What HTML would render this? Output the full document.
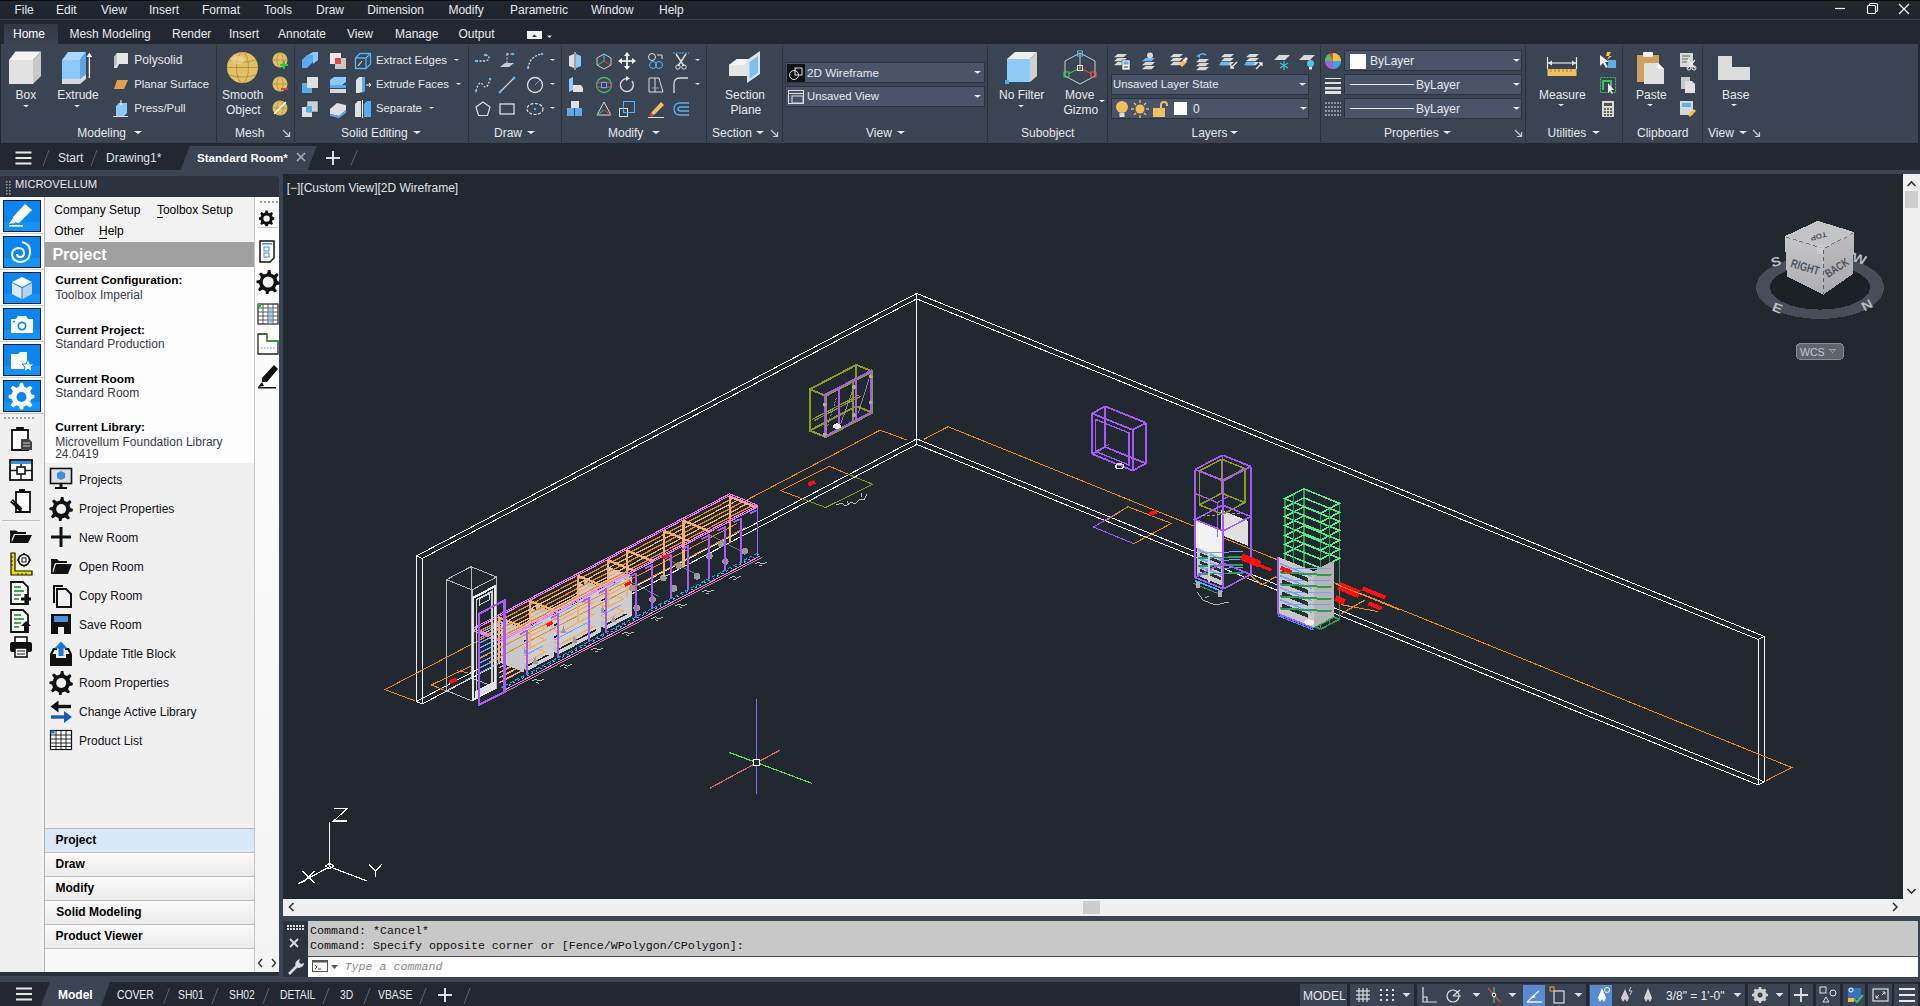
<!DOCTYPE html>
<html><head><meta charset="utf-8"><style>
html,body{margin:0;padding:0;width:1920px;height:1006px;overflow:hidden;background:#222831;}
body{position:relative;font-family:"Liberation Sans",sans-serif;}
.t{position:absolute;white-space:nowrap;line-height:1;}
.r{position:absolute;}
.s{position:absolute;overflow:visible;}
</style></head><body>
<div class="r" style="left:0px;top:0px;width:1920px;height:1006px;background:#222831;"></div>
<div class="r" style="left:0px;top:0px;width:1920px;height:1px;background:#0a0c10;"></div>
<div class="r" style="left:0px;top:1px;width:1920px;height:18px;background:#20252e;"></div>
<div class="r" style="left:0px;top:19px;width:1920px;height:1px;background:#3a414e;"></div>
<div class="r" style="left:0px;top:20px;width:1920px;height:24px;background:#222831;"></div>
<div class="r" style="left:4px;top:24px;width:54px;height:20px;background:#353c49;background:linear-gradient(#323946,#3b4352);"></div>
<div class="r" style="left:1px;top:44px;width:1917px;height:99px;background:#3b4453;"></div>
<div class="r" style="left:0px;top:143px;width:1920px;height:27px;background:#222831;"></div>
<div class="r" style="left:0px;top:170px;width:1920px;height:5px;background:#3b4453;"></div>
<div class="r" style="left:283px;top:174px;width:1620px;height:725px;background:#212830;"></div>
<div class="t" style="left:14.4px;top:3.8px;font-size:12px;color:#e6e8ec;font-weight:normal;font-family:'Liberation Sans', sans-serif;font-style:normal;">File</div>
<div class="t" style="left:56.0px;top:3.8px;font-size:12px;color:#e6e8ec;font-weight:normal;font-family:'Liberation Sans', sans-serif;font-style:normal;">Edit</div>
<div class="t" style="left:101.0px;top:3.8px;font-size:12px;color:#e6e8ec;font-weight:normal;font-family:'Liberation Sans', sans-serif;font-style:normal;">View</div>
<div class="t" style="left:149.0px;top:3.8px;font-size:12px;color:#e6e8ec;font-weight:normal;font-family:'Liberation Sans', sans-serif;font-style:normal;">Insert</div>
<div class="t" style="left:202.0px;top:3.8px;font-size:12px;color:#e6e8ec;font-weight:normal;font-family:'Liberation Sans', sans-serif;font-style:normal;">Format</div>
<div class="t" style="left:264.0px;top:3.8px;font-size:12px;color:#e6e8ec;font-weight:normal;font-family:'Liberation Sans', sans-serif;font-style:normal;">Tools</div>
<div class="t" style="left:316.0px;top:3.8px;font-size:12px;color:#e6e8ec;font-weight:normal;font-family:'Liberation Sans', sans-serif;font-style:normal;">Draw</div>
<div class="t" style="left:367.2px;top:3.8px;font-size:12px;color:#e6e8ec;font-weight:normal;font-family:'Liberation Sans', sans-serif;font-style:normal;">Dimension</div>
<div class="t" style="left:448.4px;top:3.8px;font-size:12px;color:#e6e8ec;font-weight:normal;font-family:'Liberation Sans', sans-serif;font-style:normal;">Modify</div>
<div class="t" style="left:510.0px;top:3.8px;font-size:12px;color:#e6e8ec;font-weight:normal;font-family:'Liberation Sans', sans-serif;font-style:normal;">Parametric</div>
<div class="t" style="left:591.0px;top:3.8px;font-size:12px;color:#e6e8ec;font-weight:normal;font-family:'Liberation Sans', sans-serif;font-style:normal;">Window</div>
<div class="t" style="left:659.0px;top:3.8px;font-size:12px;color:#e6e8ec;font-weight:normal;font-family:'Liberation Sans', sans-serif;font-style:normal;">Help</div>
<svg class="s" style="left:1830px;top:0px;" width="90" height="19" viewBox="0 0 90 19"><g stroke="#f2f2f2" stroke-width="1.2" fill="none"><line x1="5" y1="8.5" x2="15" y2="8.5"/><rect x="37.5" y="5.5" width="8" height="8" rx="1"/><path d="M39.5 5.5 V4.5 Q39.5 3.5 40.5 3.5 H46.5 Q47.5 3.5 47.5 4.5 V10.5 Q47.5 11.5 46.5 11.5 H45.5"/><line x1="69" y1="4" x2="79" y2="14"/><line x1="79" y1="4" x2="69" y2="14"/></g></svg>
<div class="t" style="left:13.0px;top:28.3px;font-size:12px;color:#ffffff;font-weight:normal;font-family:'Liberation Sans', sans-serif;font-style:normal;">Home</div>
<div class="t" style="left:69.4px;top:28.3px;font-size:12px;color:#e8eaee;font-weight:normal;font-family:'Liberation Sans', sans-serif;font-style:normal;">Mesh Modeling</div>
<div class="t" style="left:172.0px;top:28.3px;font-size:12px;color:#e8eaee;font-weight:normal;font-family:'Liberation Sans', sans-serif;font-style:normal;">Render</div>
<div class="t" style="left:229.0px;top:28.3px;font-size:12px;color:#e8eaee;font-weight:normal;font-family:'Liberation Sans', sans-serif;font-style:normal;">Insert</div>
<div class="t" style="left:278.0px;top:28.3px;font-size:12px;color:#e8eaee;font-weight:normal;font-family:'Liberation Sans', sans-serif;font-style:normal;">Annotate</div>
<div class="t" style="left:347.0px;top:28.3px;font-size:12px;color:#e8eaee;font-weight:normal;font-family:'Liberation Sans', sans-serif;font-style:normal;">View</div>
<div class="t" style="left:395.0px;top:28.3px;font-size:12px;color:#e8eaee;font-weight:normal;font-family:'Liberation Sans', sans-serif;font-style:normal;">Manage</div>
<div class="t" style="left:458.5px;top:28.3px;font-size:12px;color:#e8eaee;font-weight:normal;font-family:'Liberation Sans', sans-serif;font-style:normal;">Output</div>
<div class="r" style="left:527px;top:31px;width:15px;height:8px;background:#f0f0f0;"></div>
<svg class="s" style="left:527px;top:31px;" width="30" height="10" viewBox="0 0 30 10"><path d="M5 6 L7.5 3.5 L10 6 Z" fill="#333"/><path d="M20 4.5 L25 4.5 L22.5 7 Z" fill="#ddd"/></svg>
<svg class="s" style="left:14px;top:150px;" width="20" height="16" viewBox="0 0 20 16"><g fill="#e8e8e8"><rect x="1.5" y="1.5" width="16" height="2"/><rect x="1.5" y="7" width="16" height="2"/><rect x="1.5" y="12.5" width="16" height="2"/></g></svg>
<svg class="s" style="left:40px;top:146px;" width="330" height="24" viewBox="0 0 330 24"><g stroke="#5a6270" stroke-width="1"><line x1="3" y1="20" x2="9" y2="4"/><line x1="51" y1="20" x2="57" y2="4"/><line x1="311" y1="19" x2="317.5" y2="4"/></g></svg>
<svg class="s" style="left:180px;top:146px;" width="140" height="24" viewBox="0 0 140 24"><path d="M9.8 0 L136.9 0 L127.5 24 L0.4 24 Z" fill="#3b4453"/></svg>
<div class="t" style="left:58.0px;top:151.6px;font-size:12px;color:#dfe3e8;font-weight:normal;font-family:'Liberation Sans', sans-serif;font-style:normal;">Start</div>
<div class="t" style="left:106.0px;top:151.6px;font-size:12px;color:#dfe3e8;font-weight:normal;font-family:'Liberation Sans', sans-serif;font-style:normal;">Drawing1*</div>
<div class="t" style="left:197.0px;top:151.9px;font-size:11.6px;color:#ffffff;font-weight:bold;font-family:'Liberation Sans', sans-serif;font-style:normal;">Standard Room*</div>
<svg class="s" style="left:296px;top:152px;" width="12" height="12" viewBox="0 0 12 12"><g stroke="#a9afb8" stroke-width="1.6"><line x1="1" y1="1" x2="9" y2="9"/><line x1="9" y1="1" x2="1" y2="9"/></g></svg>
<svg class="s" style="left:325px;top:150px;" width="16" height="16" viewBox="0 0 16 16"><g stroke="#f0f0f0" stroke-width="1.8"><line x1="8" y1="1" x2="8" y2="15"/><line x1="1" y1="8" x2="15" y2="8"/></g></svg>
<div class="r" style="left:216px;top:45px;width:1px;height:97px;background:#2b313b;"></div>
<div class="r" style="left:294px;top:45px;width:1px;height:97px;background:#2b313b;"></div>
<div class="r" style="left:468px;top:45px;width:1px;height:97px;background:#2b313b;"></div>
<div class="r" style="left:561px;top:45px;width:1px;height:97px;background:#2b313b;"></div>
<div class="r" style="left:706px;top:45px;width:1px;height:97px;background:#2b313b;"></div>
<div class="r" style="left:782px;top:45px;width:1px;height:97px;background:#2b313b;"></div>
<div class="r" style="left:987px;top:45px;width:1px;height:97px;background:#2b313b;"></div>
<div class="r" style="left:1107px;top:45px;width:1px;height:97px;background:#2b313b;"></div>
<div class="r" style="left:1320px;top:45px;width:1px;height:97px;background:#2b313b;"></div>
<div class="r" style="left:1525px;top:45px;width:1px;height:97px;background:#2b313b;"></div>
<div class="r" style="left:1622px;top:45px;width:1px;height:97px;background:#2b313b;"></div>
<div class="r" style="left:1702px;top:45px;width:1px;height:97px;background:#2b313b;"></div>
<div class="t" style="left:77.3px;top:126.6px;font-size:12px;color:#e6e8ec;font-weight:normal;font-family:'Liberation Sans', sans-serif;font-style:normal;">Modeling</div>
<svg class="s" style="left:133.0px;top:130px;" width="10" height="6" viewBox="0 0 10 6"><path d="M1 1 L9 1 L5.0 4.0 Z" fill="#e8eaee"/></svg>
<div class="t" style="left:235.0px;top:126.6px;font-size:12px;color:#e6e8ec;font-weight:normal;font-family:'Liberation Sans', sans-serif;font-style:normal;">Mesh</div>
<svg class="s" style="left:282px;top:129px;" width="9" height="9" viewBox="0 0 9 9"><g stroke="#c8ccd2" stroke-width="1.2" fill="none"><line x1="1" y1="1" x2="7" y2="7"/><path d="M3 7.5 H7.5 V3"/></g></svg>
<div class="t" style="left:341.0px;top:126.6px;font-size:12px;color:#e6e8ec;font-weight:normal;font-family:'Liberation Sans', sans-serif;font-style:normal;">Solid Editing</div>
<svg class="s" style="left:412.0px;top:130px;" width="10" height="6" viewBox="0 0 10 6"><path d="M1 1 L9 1 L5.0 4.0 Z" fill="#e8eaee"/></svg>
<div class="t" style="left:494.0px;top:126.6px;font-size:12px;color:#e6e8ec;font-weight:normal;font-family:'Liberation Sans', sans-serif;font-style:normal;">Draw</div>
<svg class="s" style="left:526.0px;top:130px;" width="10" height="6" viewBox="0 0 10 6"><path d="M1 1 L9 1 L5.0 4.0 Z" fill="#e8eaee"/></svg>
<div class="t" style="left:608.0px;top:126.6px;font-size:12px;color:#e6e8ec;font-weight:normal;font-family:'Liberation Sans', sans-serif;font-style:normal;">Modify</div>
<svg class="s" style="left:651.0px;top:130px;" width="10" height="6" viewBox="0 0 10 6"><path d="M1 1 L9 1 L5.0 4.0 Z" fill="#e8eaee"/></svg>
<div class="t" style="left:712.0px;top:126.6px;font-size:12px;color:#e6e8ec;font-weight:normal;font-family:'Liberation Sans', sans-serif;font-style:normal;">Section</div>
<svg class="s" style="left:755.0px;top:130px;" width="10" height="6" viewBox="0 0 10 6"><path d="M1 1 L9 1 L5.0 4.0 Z" fill="#e8eaee"/></svg>
<svg class="s" style="left:770px;top:129px;" width="9" height="9" viewBox="0 0 9 9"><g stroke="#c8ccd2" stroke-width="1.2" fill="none"><line x1="1" y1="1" x2="7" y2="7"/><path d="M3 7.5 H7.5 V3"/></g></svg>
<div class="t" style="left:866.0px;top:126.6px;font-size:12px;color:#e6e8ec;font-weight:normal;font-family:'Liberation Sans', sans-serif;font-style:normal;">View</div>
<svg class="s" style="left:896.0px;top:130px;" width="10" height="6" viewBox="0 0 10 6"><path d="M1 1 L9 1 L5.0 4.0 Z" fill="#e8eaee"/></svg>
<div class="t" style="left:1021.0px;top:126.6px;font-size:12px;color:#e6e8ec;font-weight:normal;font-family:'Liberation Sans', sans-serif;font-style:normal;">Subobject</div>
<div class="t" style="left:1191.5px;top:126.6px;font-size:12px;color:#e6e8ec;font-weight:normal;font-family:'Liberation Sans', sans-serif;font-style:normal;">Layers</div>
<svg class="s" style="left:1229.0px;top:130px;" width="10" height="6" viewBox="0 0 10 6"><path d="M1 1 L9 1 L5.0 4.0 Z" fill="#e8eaee"/></svg>
<div class="t" style="left:1384.0px;top:126.6px;font-size:12px;color:#e6e8ec;font-weight:normal;font-family:'Liberation Sans', sans-serif;font-style:normal;">Properties</div>
<svg class="s" style="left:1442.0px;top:130px;" width="10" height="6" viewBox="0 0 10 6"><path d="M1 1 L9 1 L5.0 4.0 Z" fill="#e8eaee"/></svg>
<svg class="s" style="left:1514px;top:129px;" width="9" height="9" viewBox="0 0 9 9"><g stroke="#c8ccd2" stroke-width="1.2" fill="none"><line x1="1" y1="1" x2="7" y2="7"/><path d="M3 7.5 H7.5 V3"/></g></svg>
<div class="t" style="left:1547.5px;top:126.6px;font-size:12px;color:#e6e8ec;font-weight:normal;font-family:'Liberation Sans', sans-serif;font-style:normal;">Utilities</div>
<svg class="s" style="left:1591.0px;top:130px;" width="10" height="6" viewBox="0 0 10 6"><path d="M1 1 L9 1 L5.0 4.0 Z" fill="#e8eaee"/></svg>
<div class="t" style="left:1637.0px;top:126.6px;font-size:12px;color:#e6e8ec;font-weight:normal;font-family:'Liberation Sans', sans-serif;font-style:normal;">Clipboard</div>
<div class="t" style="left:1708.0px;top:126.6px;font-size:12px;color:#e6e8ec;font-weight:normal;font-family:'Liberation Sans', sans-serif;font-style:normal;">View</div>
<svg class="s" style="left:1738.0px;top:130px;" width="10" height="6" viewBox="0 0 10 6"><path d="M1 1 L9 1 L5.0 4.0 Z" fill="#e8eaee"/></svg>
<svg class="s" style="left:1752px;top:129px;" width="9" height="9" viewBox="0 0 9 9"><g stroke="#c8ccd2" stroke-width="1.2" fill="none"><line x1="1" y1="1" x2="7" y2="7"/><path d="M3 7.5 H7.5 V3"/></g></svg>
<div class="t" style="left:15.5px;top:88.8px;font-size:12px;color:#e6e8ec;font-weight:normal;font-family:'Liberation Sans', sans-serif;font-style:normal;">Box</div>
<div class="t" style="left:57.3px;top:88.8px;font-size:12px;color:#e6e8ec;font-weight:normal;font-family:'Liberation Sans', sans-serif;font-style:normal;">Extrude</div>
<div class="t" style="left:222.0px;top:89.1px;font-size:12px;color:#e6e8ec;font-weight:normal;font-family:'Liberation Sans', sans-serif;font-style:normal;">Smooth</div>
<div class="t" style="left:226.0px;top:103.8px;font-size:12px;color:#e6e8ec;font-weight:normal;font-family:'Liberation Sans', sans-serif;font-style:normal;">Object</div>
<div class="t" style="left:725.0px;top:88.8px;font-size:12px;color:#e6e8ec;font-weight:normal;font-family:'Liberation Sans', sans-serif;font-style:normal;">Section</div>
<div class="t" style="left:730.6px;top:103.5px;font-size:12px;color:#e6e8ec;font-weight:normal;font-family:'Liberation Sans', sans-serif;font-style:normal;">Plane</div>
<div class="t" style="left:999.0px;top:88.8px;font-size:12px;color:#e6e8ec;font-weight:normal;font-family:'Liberation Sans', sans-serif;font-style:normal;">No Filter</div>
<div class="t" style="left:1065.0px;top:88.8px;font-size:12px;color:#e6e8ec;font-weight:normal;font-family:'Liberation Sans', sans-serif;font-style:normal;">Move</div>
<div class="t" style="left:1063.5px;top:103.5px;font-size:12px;color:#e6e8ec;font-weight:normal;font-family:'Liberation Sans', sans-serif;font-style:normal;">Gizmo</div>
<div class="t" style="left:1539.0px;top:88.8px;font-size:12px;color:#e6e8ec;font-weight:normal;font-family:'Liberation Sans', sans-serif;font-style:normal;">Measure</div>
<div class="t" style="left:1636.0px;top:88.8px;font-size:12px;color:#e6e8ec;font-weight:normal;font-family:'Liberation Sans', sans-serif;font-style:normal;">Paste</div>
<div class="t" style="left:1722.0px;top:88.8px;font-size:12px;color:#e6e8ec;font-weight:normal;font-family:'Liberation Sans', sans-serif;font-style:normal;">Base</div>
<svg class="s" style="left:21.8px;top:103.5px;" width="8" height="6" viewBox="0 0 8 6"><path d="M1 1 L7 1 L4.0 3.25 Z" fill="#e8eaee"/></svg>
<svg class="s" style="left:73.0px;top:103.5px;" width="8" height="6" viewBox="0 0 8 6"><path d="M1 1 L7 1 L4.0 3.25 Z" fill="#e8eaee"/></svg>
<svg class="s" style="left:1017.0px;top:104px;" width="8" height="6" viewBox="0 0 8 6"><path d="M1 1 L7 1 L4.0 3.25 Z" fill="#e8eaee"/></svg>
<svg class="s" style="left:1557.0px;top:103px;" width="8" height="6" viewBox="0 0 8 6"><path d="M1 1 L7 1 L4.0 3.25 Z" fill="#e8eaee"/></svg>
<svg class="s" style="left:1646.0px;top:103px;" width="8" height="6" viewBox="0 0 8 6"><path d="M1 1 L7 1 L4.0 3.25 Z" fill="#e8eaee"/></svg>
<svg class="s" style="left:1730.0px;top:103px;" width="8" height="6" viewBox="0 0 8 6"><path d="M1 1 L7 1 L4.0 3.25 Z" fill="#e8eaee"/></svg>
<svg class="s" style="left:1097.5px;top:99px;" width="8" height="6" viewBox="0 0 8 6"><path d="M1 1 L7 1 L4.0 3.25 Z" fill="#e8eaee"/></svg>
<div class="t" style="left:134.3px;top:54.4px;font-size:12px;color:#e6e8ec;font-weight:normal;font-family:'Liberation Sans', sans-serif;font-style:normal;">Polysolid</div>
<div class="t" style="left:134.3px;top:79.4px;font-size:11.3px;color:#e6e8ec;font-weight:normal;font-family:'Liberation Sans', sans-serif;font-style:normal;">Planar Surface</div>
<div class="t" style="left:134.3px;top:103.1px;font-size:11.4px;color:#e6e8ec;font-weight:normal;font-family:'Liberation Sans', sans-serif;font-style:normal;">Press/Pull</div>
<div class="t" style="left:376.0px;top:54.9px;font-size:11.4px;color:#e6e8ec;font-weight:normal;font-family:'Liberation Sans', sans-serif;font-style:normal;">Extract Edges</div>
<div class="t" style="left:376.0px;top:79.4px;font-size:11.3px;color:#e6e8ec;font-weight:normal;font-family:'Liberation Sans', sans-serif;font-style:normal;">Extrude Faces</div>
<div class="t" style="left:376.0px;top:103.2px;font-size:11.3px;color:#e6e8ec;font-weight:normal;font-family:'Liberation Sans', sans-serif;font-style:normal;">Separate</div>
<svg class="s" style="left:452.5px;top:58px;" width="7" height="6" viewBox="0 0 7 6"><path d="M1 1 L6 1 L3.5 2.875 Z" fill="#e8eaee"/></svg>
<svg class="s" style="left:454.5px;top:82px;" width="7" height="6" viewBox="0 0 7 6"><path d="M1 1 L6 1 L3.5 2.875 Z" fill="#e8eaee"/></svg>
<svg class="s" style="left:427.5px;top:106px;" width="7" height="6" viewBox="0 0 7 6"><path d="M1 1 L6 1 L3.5 2.875 Z" fill="#e8eaee"/></svg>
<svg class="s" style="left:548.5px;top:58px;" width="7" height="6" viewBox="0 0 7 6"><path d="M1 1 L6 1 L3.5 2.875 Z" fill="#e8eaee"/></svg>
<svg class="s" style="left:548.5px;top:82px;" width="7" height="6" viewBox="0 0 7 6"><path d="M1 1 L6 1 L3.5 2.875 Z" fill="#e8eaee"/></svg>
<svg class="s" style="left:548.5px;top:106px;" width="7" height="6" viewBox="0 0 7 6"><path d="M1 1 L6 1 L3.5 2.875 Z" fill="#e8eaee"/></svg>
<svg class="s" style="left:693.5px;top:58px;" width="7" height="6" viewBox="0 0 7 6"><path d="M1 1 L6 1 L3.5 2.875 Z" fill="#e8eaee"/></svg>
<svg class="s" style="left:693.5px;top:82px;" width="7" height="6" viewBox="0 0 7 6"><path d="M1 1 L6 1 L3.5 2.875 Z" fill="#e8eaee"/></svg>
<svg class="s" style="left:8px;top:50px;" width="36" height="36" viewBox="0 0 36 36"><path d="M1 10 L7.5 1.5 L33 1.5 L25 10 Z" fill="#f4f4f4"/><path d="M25 10 L33 1.5 L33 26 L25 34 Z" fill="#c9c9c9"/><rect x="1" y="10" width="24" height="24" fill="#e2e2e2"/></svg>
<svg class="s" style="left:60px;top:50px;" width="36" height="36" viewBox="0 0 36 36"><path d="M2 10 L8 2 L26 2 L20 10 Z" fill="#a8d8ff"/><path d="M20 10 L26 2 L26 24 L20 29 Z" fill="#5aa6e8"/><rect x="2" y="10" width="18" height="19" fill="#8cc8f8"/><path d="M2 29 L20 29 L26 24 L26 29 L20 34 L2 34 Z" fill="#d8d8d8"/><line x1="29.4" y1="4" x2="29.4" y2="28" stroke="#fff" stroke-width="1.3"/><path d="M26.5 7 L29.4 2.5 L32.3 7 Z" fill="#fff"/></svg>
<svg class="s" style="left:226px;top:51px;" width="34" height="34" viewBox="0 0 34 34"><circle cx="16.5" cy="16.5" r="15.5" fill="#e3c067"/><g stroke="#b08a30" stroke-width="0.8" fill="none"><ellipse cx="16.5" cy="16.5" rx="6" ry="15.5"/><line x1="1" y1="16.5" x2="32" y2="16.5"/><path d="M3 9 Q16.5 13 30 9"/><path d="M3 24 Q16.5 28 30 24"/></g><ellipse cx="12" cy="9" rx="7" ry="4" fill="#f5dc98" opacity="0.6"/></svg>
<svg class="s" style="left:727px;top:50px;" width="36" height="36" viewBox="0 0 36 36"><path d="M2 15 L10 9 L24 9 L24 26 L2 26 Z" fill="#e4e4e4"/><path d="M2 15 L10 9 L24 9 L17 15 Z" fill="#f5f5f5"/><path d="M20 10 L33 1 L33 24 L20 33 Z" fill="#dfe3e8"/><path d="M22.5 12 L31 6 L31 22.5 L22.5 29 Z" fill="#7ac0f0"/></svg>
<svg class="s" style="left:1004px;top:50px;" width="36" height="36" viewBox="0 0 36 36"><path d="M3 9 L11 2 L33 2 L26 9 Z" fill="#eeeeee"/><path d="M26 9 L33 2 L33 26 L26 32 Z" fill="#cfcfcf"/><rect x="3" y="9" width="23" height="23" fill="#8ccbf5"/><rect x="1" y="30" width="4" height="4" fill="#5aa6e8"/></svg>
<svg class="s" style="left:1062px;top:50px;" width="36" height="36" viewBox="0 0 36 36"><g stroke="#c8ccd2" stroke-width="1" fill="none"><path d="M18 3 L33 11 L33 26 L18 34 L3 26 L3 11 Z"/><line x1="18" y1="18" x2="18" y2="3"/></g><line x1="18" y1="18" x2="6" y2="24" stroke="#30c060" stroke-width="1.2"/><line x1="18" y1="18" x2="30" y2="24" stroke="#e04040" stroke-width="1.2"/><rect x="15.5" y="1" width="5" height="5" fill="none" stroke="#5ab0f0"/><rect x="15.5" y="15.5" width="5" height="5" fill="none" stroke="#e0e0e0"/><rect x="2" y="22" width="5" height="5" fill="none" stroke="#40d070"/><rect x="29" y="22" width="5" height="5" fill="none" stroke="#f05050"/></svg>
<svg class="s" style="left:1546px;top:56px;" width="34" height="24" viewBox="0 0 34 24"><g stroke="#e8e8e8" stroke-width="1.2"><line x1="2" y1="7" x2="30" y2="7"/><line x1="1.5" y1="1" x2="1.5" y2="13"/><line x1="30.5" y1="1" x2="30.5" y2="13"/></g><path d="M2 7 L6 4.5 L6 9.5Z M30 7 L26 4.5 L26 9.5Z" fill="#e8e8e8"/><rect x="1.5" y="13" width="29" height="7" fill="#f0c060"/><g stroke="#9a7020" stroke-width="0.8"><line x1="5" y1="13" x2="5" y2="16"/><line x1="9" y1="13" x2="9" y2="16"/><line x1="13" y1="13" x2="13" y2="16"/><line x1="17" y1="13" x2="17" y2="16"/><line x1="21" y1="13" x2="21" y2="16"/><line x1="25" y1="13" x2="25" y2="16"/></g></svg>
<svg class="s" style="left:1634px;top:50px;" width="34" height="36" viewBox="0 0 34 36"><rect x="3" y="5" width="22" height="27" fill="#d0a060"/><rect x="9" y="2" width="10" height="5" rx="1" fill="#f0f0f0"/><path d="M10 13 L24 13 L30 19 L30 34 L10 34 Z" fill="#e0e0e0"/><path d="M24 13 L24 19 L30 19 Z" fill="#ffffff"/></svg>
<svg class="s" style="left:1716px;top:54px;" width="36" height="28" viewBox="0 0 36 28"><path d="M2 2 L16 2 L16 13 L34 13 L34 26 L2 26 Z" fill="#dcdcdc"/></svg>
<svg class="s" style="left:112px;top:52px;" width="18" height="18" viewBox="0 0 18 18"><path d="M2 5 L5 1 L16 1 L16 12 L7 12 L5 16 L2 16 Z" fill="#e6e6e6"/><path d="M2 5 L5 1 L5 12 L2 16Z" fill="#c0c0c0"/></svg>
<svg class="s" style="left:113px;top:79px;" width="16" height="12" viewBox="0 0 16 12"><path d="M4 1 L15 1 L11 10 L1 10 Z" fill="#e0a050"/></svg>
<svg class="s" style="left:112px;top:100px;" width="18" height="18" viewBox="0 0 18 18"><path d="M4 6 L7 3 L15 3 L15 13 L12 16 L4 16 Z" fill="#8cc8f8"/><line x1="9" y1="0" x2="9" y2="5" stroke="#fff"/><line x1="1" y1="16.5" x2="16" y2="16.5" stroke="#ddd"/></svg>
<svg class="s" style="left:272px;top:52px;" width="18" height="18" viewBox="0 0 18 18"><circle cx="8" cy="8" r="7.5" fill="#e3c067"/><g stroke="#a88a40" stroke-width="0.7" fill="none"><ellipse cx="8" cy="8" rx="3" ry="7.5"/><line x1="0.5" y1="8" x2="15.5" y2="8"/></g><path d="M12 9 V17 M8 13 H16" stroke="#30c040" stroke-width="2"/></svg>
<svg class="s" style="left:272px;top:76px;" width="18" height="18" viewBox="0 0 18 18"><circle cx="8" cy="8" r="7.5" fill="#e3c067"/><g stroke="#a88a40" stroke-width="0.7" fill="none"><ellipse cx="8" cy="8" rx="3" ry="7.5"/><line x1="0.5" y1="8" x2="15.5" y2="8"/></g><path d="M9 13 H16" stroke="#e04040" stroke-width="2"/></svg>
<svg class="s" style="left:272px;top:100px;" width="18" height="18" viewBox="0 0 18 18"><circle cx="8" cy="8" r="7.5" fill="#e3c067"/><g stroke="#a88a40" stroke-width="0.7" fill="none"><ellipse cx="8" cy="8" rx="3" ry="7.5"/><line x1="0.5" y1="8" x2="15.5" y2="8"/></g><line x1="2" y1="14" x2="14" y2="2" stroke="#fff" stroke-width="1.2"/></svg>
<svg class="s" style="left:301px;top:52px;" width="18" height="18" viewBox="0 0 18 18"><path d="M1 8 L6 3 L12 3 L12 10 L6 16 L1 16 Z" fill="#5aaaf0"/><path d="M7 3 L12 0 L17 0 L17 8 L12 12 L12 3Z" fill="#8cc8f8"/></svg>
<svg class="s" style="left:301px;top:76px;" width="18" height="18" viewBox="0 0 18 18"><rect x="1" y="7" width="10" height="10" fill="#5aaaf0"/><rect x="6" y="1" width="11" height="11" fill="#e0e0e0"/></svg>
<svg class="s" style="left:301px;top:100px;" width="18" height="18" viewBox="0 0 18 18"><rect x="1" y="7" width="10" height="10" fill="#e0e0e0"/><rect x="6" y="1" width="11" height="11" fill="#d0d0d0" stroke="#333" stroke-width="0.5"/><rect x="5" y="6" width="6" height="6" fill="#5aaaf0"/></svg>
<svg class="s" style="left:329px;top:52px;" width="18" height="18" viewBox="0 0 18 18"><rect x="1" y="1" width="11" height="11" fill="#e8e8e8"/><rect x="6" y="6" width="11" height="11" fill="#c8c8c8"/><rect x="6" y="6" width="6" height="6" fill="#e04848"/></svg>
<svg class="s" style="left:329px;top:76px;" width="18" height="18" viewBox="0 0 18 18"><path d="M1 4 L5 1 L17 1 L17 6 L13 9 L1 9Z" fill="#8cc8f8"/><rect x="1" y="9" width="16" height="3" fill="#5aaaf0"/><rect x="1" y="13" width="16" height="4" fill="#d8d8d8"/></svg>
<svg class="s" style="left:329px;top:100px;" width="18" height="18" viewBox="0 0 18 18"><path d="M1 9 L8 3 L17 5 L17 10 L10 16 L1 14Z" fill="#e0e0e0"/><path d="M1 14 L10 16 L17 10 L17 13 L10 18 L1 16Z" fill="#5aaaf0"/></svg>
<svg class="s" style="left:354px;top:52px;" width="18" height="18" viewBox="0 0 18 18"><g stroke="#5ab0f0" stroke-width="1.3" fill="none"><path d="M1.5 6 L6 1.5 L16.5 1.5 L16.5 12 L12 16.5 L1.5 16.5 Z"/><path d="M1.5 6 H12 V16.5 M12 6 L16.5 1.5"/></g><path d="M4 14 L8 9" stroke="#fff"/></svg>
<svg class="s" style="left:354px;top:76px;" width="18" height="18" viewBox="0 0 18 18"><path d="M2 4 L5 1 L8 1 L8 16 L5 17 L2 17Z" fill="#e0e0e0"/><path d="M8 1 L11 1 L11 15 L8 17Z" fill="#5aaaf0"/><path d="M12 9 H17 M15 7 L17 9 L15 11" stroke="#fff" fill="none"/></svg>
<svg class="s" style="left:354px;top:100px;" width="18" height="18" viewBox="0 0 18 18"><path d="M1 4 L4 1 L7 1 L7 17 L1 17Z" fill="#e0e0e0"/><line x1="8.5" y1="0" x2="8.5" y2="18" stroke="#fff"/><path d="M10 4 L13 1 L17 1 L17 17 L10 17Z" fill="#5aaaf0"/></svg>
<svg class="s" style="left:473.5px;top:52px;" width="18" height="18" viewBox="0 0 18 18"><path d="M2 9 H10 Q15 9 15 6 Q15 3 11 3" stroke="#ddd" stroke-dasharray="2 1.5" fill="none" stroke-width="1.3"/><circle cx="2" cy="9" r="1.3" fill="#5ab0f0"/><circle cx="11" cy="3" r="1.3" fill="#5ab0f0"/></svg>
<svg class="s" style="left:498px;top:52px;" width="18" height="18" viewBox="0 0 18 18"><path d="M2 15 L7 11 L16 11 L11 15 Z" fill="#c8ccd2"/><path d="M9 2 V11 M9 2 H15" stroke="#ddd" stroke-dasharray="2 1.5" fill="none"/><circle cx="9" cy="2" r="1.3" fill="#5ab0f0"/><circle cx="15" cy="2" r="1.3" fill="#5ab0f0"/></svg>
<svg class="s" style="left:525.5px;top:52px;" width="18" height="18" viewBox="0 0 18 18"><path d="M2 16 Q4 4 16 2" stroke="#ddd" stroke-dasharray="2 1.5" fill="none" stroke-width="1.3"/><circle cx="2" cy="16" r="1.3" fill="#5ab0f0"/><circle cx="16" cy="2" r="1.3" fill="#5ab0f0"/></svg>
<svg class="s" style="left:473.5px;top:76px;" width="18" height="18" viewBox="0 0 18 18"><path d="M2 15 Q5 3 9 9 Q13 15 16 3" stroke="#ddd" stroke-dasharray="2 1.5" fill="none" stroke-width="1.3"/><circle cx="2" cy="15" r="1.3" fill="#5ab0f0"/><circle cx="16" cy="3" r="1.3" fill="#5ab0f0"/></svg>
<svg class="s" style="left:498px;top:76px;" width="18" height="18" viewBox="0 0 18 18"><line x1="2" y1="16" x2="16" y2="2" stroke="#ddd" stroke-width="1.2"/><circle cx="2" cy="16" r="1.5" fill="#5ab0f0"/><circle cx="16" cy="2" r="1.5" fill="#5ab0f0"/></svg>
<svg class="s" style="left:525.5px;top:76px;" width="18" height="18" viewBox="0 0 18 18"><circle cx="9" cy="9" r="7.5" stroke="#ddd" fill="none" stroke-width="1.3"/><line x1="9" y1="9" x2="14" y2="4" stroke="#5ab0f0"/></svg>
<svg class="s" style="left:473.5px;top:100px;" width="18" height="18" viewBox="0 0 18 18"><path d="M9 2 L16 7 L13.5 15.5 L4.5 15.5 L2 7 Z" stroke="#ddd" fill="none" stroke-width="1.2"/></svg>
<svg class="s" style="left:498px;top:100px;" width="18" height="18" viewBox="0 0 18 18"><rect x="2" y="4" width="14" height="10" stroke="#ddd" fill="none" stroke-width="1.3"/></svg>
<svg class="s" style="left:525.5px;top:100px;" width="18" height="18" viewBox="0 0 18 18"><ellipse cx="9" cy="9" rx="8" ry="5.5" stroke="#ddd" fill="none" stroke-width="1.2" stroke-dasharray="3 1.5"/><circle cx="9" cy="9" r="1.2" fill="#5ab0f0"/></svg>
<svg class="s" style="left:566px;top:52px;" width="18" height="18" viewBox="0 0 18 18"><path d="M3 4 L8 2 L8 16 L3 14Z" fill="#e0e0e0"/><path d="M10 2 L15 4 L15 14 L10 16Z" fill="#8cc8f8"/><line x1="9" y1="0" x2="9" y2="18" stroke="#fff"/></svg>
<svg class="s" style="left:594.5px;top:52px;" width="18" height="18" viewBox="0 0 18 18"><path d="M9 2 L16 6 L16 13 L9 17 L2 13 L2 6Z" stroke="#ccc" fill="none"/><line x1="9" y1="9" x2="3" y2="13" stroke="#40c060"/><line x1="9" y1="9" x2="15" y2="13" stroke="#e04040"/><line x1="9" y1="9" x2="9" y2="2" stroke="#5ab0f0"/></svg>
<svg class="s" style="left:618px;top:52px;" width="18" height="18" viewBox="0 0 18 18"><path d="M9 1 V17 M1 9 H17" stroke="#fff" stroke-width="1.6"/><path d="M9 0 L6 4 H12Z M9 18 L6 14 H12Z M0 9 L4 6 V12Z M18 9 L14 6 V12Z" fill="#fff"/></svg>
<svg class="s" style="left:647px;top:52px;" width="18" height="18" viewBox="0 0 18 18"><circle cx="5" cy="5" r="3.5" stroke="#ddd" fill="none"/><circle cx="6" cy="13" r="3.5" stroke="#5ab0f0" fill="none"/><circle cx="12" cy="13" r="3.5" stroke="#5ab0f0" fill="none"/><path d="M10 3 H15 V7" stroke="#ddd" fill="none"/></svg>
<svg class="s" style="left:672px;top:52px;" width="18" height="18" viewBox="0 0 18 18"><path d="M4 2 L12 14 M14 2 L6 14" stroke="#e0e0e0" stroke-width="1.4"/><circle cx="6" cy="15" r="2.2" stroke="#e0e0e0" fill="none"/><circle cx="12" cy="15" r="2.2" stroke="#e0e0e0" fill="none"/><line x1="1" y1="1" x2="17" y2="1" stroke="#5ab0f0" stroke-dasharray="2 1"/></svg>
<svg class="s" style="left:566px;top:76px;" width="18" height="18" viewBox="0 0 18 18"><path d="M3 3 L7 1 L7 14 L3 16Z" fill="#8cc8f8"/><path d="M7 9 L15 9 L17 12 L17 16 L7 16Z" fill="#e0e0e0"/></svg>
<svg class="s" style="left:594.5px;top:76px;" width="18" height="18" viewBox="0 0 18 18"><circle cx="9" cy="9" r="7.5" stroke="#40c060" fill="none" stroke-width="1.3"/><ellipse cx="9" cy="9" rx="7.5" ry="3" stroke="#e04080" fill="none"/><rect x="6.5" y="6.5" width="5" height="5" stroke="#5ab0f0" fill="none"/></svg>
<svg class="s" style="left:618px;top:76px;" width="18" height="18" viewBox="0 0 18 18"><path d="M14 5 A6.5 6.5 0 1 1 9 2.5" stroke="#ddd" fill="none" stroke-width="1.4"/><path d="M8 0 L12 2.5 L8 5Z" fill="#ddd"/></svg>
<svg class="s" style="left:647px;top:76px;" width="18" height="18" viewBox="0 0 18 18"><path d="M2 2 H8 V16 H2Z" stroke="#ddd" fill="none"/><path d="M8 2 L12 2 L16 16 L8 16" stroke="#ddd" fill="none"/><path d="M5 12 H12" stroke="#5ab0f0"/></svg>
<svg class="s" style="left:672px;top:76px;" width="18" height="18" viewBox="0 0 18 18"><path d="M2 17 V8 Q2 2 8 2 H16" stroke="#ddd" fill="none" stroke-width="1.3"/></svg>
<svg class="s" style="left:566px;top:100px;" width="18" height="18" viewBox="0 0 18 18"><rect x="1" y="8" width="7" height="8" fill="#5aaaf0"/><rect x="9" y="8" width="7" height="8" fill="#5aaaf0"/><rect x="5" y="1" width="8" height="7" fill="#e0e0e0"/></svg>
<svg class="s" style="left:594.5px;top:100px;" width="18" height="18" viewBox="0 0 18 18"><path d="M9 2 L16 15 L2 15Z" stroke="#ddd" fill="none"/><line x1="9" y1="10" x2="2" y2="15" stroke="#40c060"/><line x1="9" y1="10" x2="16" y2="15" stroke="#e04040"/></svg>
<svg class="s" style="left:618px;top:100px;" width="18" height="18" viewBox="0 0 18 18"><rect x="1.5" y="8.5" width="8" height="8" stroke="#ddd" fill="none"/><rect x="5.5" y="1.5" width="11" height="11" stroke="#5ab0f0" fill="none"/></svg>
<svg class="s" style="left:647px;top:100px;" width="18" height="18" viewBox="0 0 18 18"><path d="M4 13 L14 2 L17 5 L7 15Z" fill="#f0c060"/><path d="M2 15 L4 13 L7 15 L5 17Z" fill="#e04040"/><line x1="1" y1="17.5" x2="17" y2="17.5" stroke="#ddd"/></svg>
<svg class="s" style="left:672px;top:100px;" width="18" height="18" viewBox="0 0 18 18"><path d="M17 3 H8 Q2 3 2 9 Q2 15 8 15 H17 M17 7 H9 Q6 7 6 9 Q6 11 9 11 H17" stroke="#5ab0f0" fill="none" stroke-width="1.3"/></svg>
<div class="r" style="left:785px;top:62px;width:200px;height:21px;background:#4a5469;border:1px solid #2c3240;box-sizing:border-box;"></div>
<svg class="s" style="left:972.5px;top:69.5px;" width="9" height="6" viewBox="0 0 9 6"><path d="M1 1 L8 1 L4.5 3.625 Z" fill="#e8eaee"/></svg>
<div class="r" style="left:785px;top:86px;width:200px;height:21px;background:#4a5469;border:1px solid #2c3240;box-sizing:border-box;"></div>
<svg class="s" style="left:972.5px;top:93.5px;" width="9" height="6" viewBox="0 0 9 6"><path d="M1 1 L8 1 L4.5 3.625 Z" fill="#e8eaee"/></svg>
<div class="r" style="left:787px;top:64px;width:18px;height:18px;background:#101216;"></div>
<svg class="s" style="left:787px;top:64px;" width="18" height="18" viewBox="0 0 18 18"><g stroke="#ddd" fill="none" stroke-width="1"><circle cx="7" cy="11" r="4.5"/><rect x="8" y="4" width="7" height="7"/></g></svg>
<div class="t" style="left:807.0px;top:67.1px;font-size:11.7px;color:#e6e8ec;font-weight:normal;font-family:'Liberation Sans', sans-serif;font-style:normal;">2D Wireframe</div>
<svg class="s" style="left:787px;top:88px;" width="18" height="18" viewBox="0 0 18 18"><rect x="1.5" y="2.5" width="15" height="13" stroke="#ddd" fill="none"/><line x1="1.5" y1="5.5" x2="16.5" y2="5.5" stroke="#ddd"/><rect x="5" y="8" width="11" height="7" stroke="#ddd" fill="none"/></svg>
<div class="t" style="left:807.0px;top:91.4px;font-size:11.3px;color:#e6e8ec;font-weight:normal;font-family:'Liberation Sans', sans-serif;font-style:normal;">Unsaved View</div>
<div class="r" style="left:1111px;top:74px;width:198px;height:21px;background:#4a5469;border:1px solid #2c3240;box-sizing:border-box;"></div>
<svg class="s" style="left:1297.5px;top:81.5px;" width="9" height="6" viewBox="0 0 9 6"><path d="M1 1 L8 1 L4.5 3.625 Z" fill="#e8eaee"/></svg>
<div class="r" style="left:1111px;top:98px;width:198px;height:21px;background:#4a5469;border:1px solid #2c3240;box-sizing:border-box;"></div>
<svg class="s" style="left:1298.5px;top:105.5px;" width="9" height="6" viewBox="0 0 9 6"><path d="M1 1 L8 1 L4.5 3.625 Z" fill="#e8eaee"/></svg>
<div class="t" style="left:1113.0px;top:79.4px;font-size:11.3px;color:#e6e8ec;font-weight:normal;font-family:'Liberation Sans', sans-serif;font-style:normal;">Unsaved Layer State</div>
<svg class="s" style="left:1113px;top:52px;" width="18" height="18" viewBox="0 0 18 18"><path d="M4.5 2 H14 L10.5 5.2 H1 Z" fill="#d8d8d8"/><path d="M4.5 6 H14 L10.5 9.2 H1 Z" fill="#d8d8d8"/><path d="M4.5 10 H14 L10.5 13.2 H1 Z" fill="#d8d8d8"/><rect x="9" y="8" width="8" height="10" fill="#eee" stroke="#333" stroke-width="0.5"/><rect x="10.5" y="9.5" width="5" height="3" fill="#5ab0f0"/><path d="M11 15 H15" stroke="#333"/></svg>
<svg class="s" style="left:1141px;top:52px;" width="18" height="18" viewBox="0 0 18 18"><path d="M4.5 10 H14 L10.5 13.2 H1 Z" fill="#d8d8d8"/><path d="M4.5 14 H14 L10.5 17.2 H1 Z" fill="#d8d8d8"/><path d="M4.5 6 H14 L10.5 9.2 H1 Z" fill="#6ab8f0"/><circle cx="9" cy="3.5" r="3" fill="#d8d8d8"/></svg>
<svg class="s" style="left:1169px;top:52px;" width="18" height="18" viewBox="0 0 18 18"><path d="M4.5 2 H14 L10.5 5.2 H1 Z" fill="#d8d8d8"/><path d="M4.5 6 H14 L10.5 9.2 H1 Z" fill="#d8d8d8"/><path d="M4.5 10 H14 L10.5 13.2 H1 Z" fill="#d8d8d8"/><path d="M10 12 L15 7 L18 10 L13 15Z" fill="#f0c060"/><path d="M14 8 L17 5 L19 7 L16 10Z" fill="#eee"/></svg>
<svg class="s" style="left:1195px;top:52px;" width="18" height="18" viewBox="0 0 18 18"><path d="M4.5 7 H14 L10.5 10.2 H1 Z" fill="#d8d8d8"/><path d="M4.5 11 H14 L10.5 14.2 H1 Z" fill="#d8d8d8"/><path d="M4.5 15 H14 L10.5 18.2 H1 Z" fill="#d8d8d8"/><path d="M3 4 Q7 0 11 3" stroke="#5ab0f0" stroke-width="1.6" fill="none"/><path d="M1 4 L5 2 L5 6Z" fill="#5ab0f0"/></svg>
<svg class="s" style="left:1220px;top:52px;" width="18" height="18" viewBox="0 0 18 18"><path d="M4.5 2 H14 L10.5 5.2 H1 Z" fill="#d8d8d8"/><path d="M4.5 6 H14 L10.5 9.2 H1 Z" fill="#d8d8d8"/><path d="M4.5 10 H14 L10.5 13.2 H1 Z" fill="#d8d8d8"/><path d="M1 10 H10.5 L8 13.2 H-1Z" fill="#6ab8f0"/><path d="M17 10 L11 16 M11 13 V16 H14" stroke="#eee" stroke-width="1.3" fill="none"/></svg>
<svg class="s" style="left:1245px;top:52px;" width="18" height="18" viewBox="0 0 18 18"><path d="M4.5 2 H14 L10.5 5.2 H1 Z" fill="#d8d8d8"/><path d="M4.5 6 H14 L10.5 9.2 H1 Z" fill="#d8d8d8"/><path d="M4.5 10 H14 L10.5 13.2 H1 Z" fill="#d8d8d8"/><path d="M1 10 H10.5 L8 13.2 H-1Z" fill="#6ab8f0"/><path d="M11 17 L17 11 M14 11 H17 V14" stroke="#eee" stroke-width="1.3" fill="none"/></svg>
<svg class="s" style="left:1273px;top:52px;" width="18" height="18" viewBox="0 0 18 18"><path d="M6 3 H17 L12 8 H1Z" fill="#d8d8d8"/><g stroke="#40c0e0" stroke-width="1.2"><line x1="11" y1="9" x2="11" y2="18"/><line x1="7" y1="11" x2="15" y2="16"/><line x1="15" y1="11" x2="7" y2="16"/></g></svg>
<svg class="s" style="left:1298px;top:52px;" width="18" height="18" viewBox="0 0 18 18"><path d="M6 3 H17 L12 8 H1Z" fill="#d8d8d8"/><circle cx="12.5" cy="11.5" r="3.5" fill="#50c8e0"/><rect x="11" y="15" width="3" height="2.5" fill="#eee"/></svg>
<svg class="s" style="left:1113px;top:100px;" width="18" height="18" viewBox="0 0 18 18"><circle cx="9" cy="7" r="6" fill="#f0c060"/><rect x="6.5" y="13" width="5" height="4" fill="#ddd"/></svg>
<svg class="s" style="left:1131px;top:100px;" width="18" height="18" viewBox="0 0 18 18"><circle cx="9" cy="9" r="4.5" fill="#f0c060"/><g stroke="#f0c060" stroke-width="1.3"><line x1="9" y1="0" x2="9" y2="3"/><line x1="9" y1="15" x2="9" y2="18"/><line x1="0" y1="9" x2="3" y2="9"/><line x1="15" y1="9" x2="18" y2="9"/><line x1="3" y1="3" x2="5" y2="5"/><line x1="13" y1="13" x2="15" y2="15"/><line x1="3" y1="15" x2="5" y2="13"/><line x1="13" y1="5" x2="15" y2="3"/></g></svg>
<svg class="s" style="left:1151px;top:100px;" width="18" height="18" viewBox="0 0 18 18"><rect x="2" y="8" width="12" height="9" fill="#f0c060"/><path d="M10 8 V5 Q10 2 13 2 Q16 2 16 5 V6" stroke="#f0c060" stroke-width="2" fill="none"/></svg>
<div class="r" style="left:1174px;top:102px;width:13px;height:13px;background:#ffffff;"></div>
<div class="t" style="left:1193.0px;top:102.8px;font-size:12px;color:#e6e8ec;font-weight:normal;font-family:'Liberation Sans', sans-serif;font-style:normal;">0</div>
<svg class="s" style="left:1324px;top:52px;" width="18" height="18" viewBox="0 0 18 18"><circle cx="9" cy="9" r="8" fill="#e05050"/><path d="M9 9 L9 1 A8 8 0 0 1 17 9Z" fill="#f0c040"/><path d="M9 9 L17 9 A8 8 0 0 1 9 17Z" fill="#40a0f0"/><path d="M9 9 L9 17 A8 8 0 0 1 1 9Z" fill="#a060e0"/><path d="M9 9 L1 9 A8 8 0 0 1 5 2Z" fill="#50c050"/></svg>
<div class="r" style="left:1344px;top:50px;width:178px;height:21px;background:#4a5469;border:1px solid #2c3240;box-sizing:border-box;"></div>
<svg class="s" style="left:1511.5px;top:57.5px;" width="9" height="6" viewBox="0 0 9 6"><path d="M1 1 L8 1 L4.5 3.625 Z" fill="#e8eaee"/></svg>
<div class="r" style="left:1344px;top:74px;width:178px;height:21px;background:#4a5469;border:1px solid #2c3240;box-sizing:border-box;"></div>
<svg class="s" style="left:1511.5px;top:81.5px;" width="9" height="6" viewBox="0 0 9 6"><path d="M1 1 L8 1 L4.5 3.625 Z" fill="#e8eaee"/></svg>
<div class="r" style="left:1344px;top:98px;width:178px;height:21px;background:#4a5469;border:1px solid #2c3240;box-sizing:border-box;"></div>
<svg class="s" style="left:1511.5px;top:105.5px;" width="9" height="6" viewBox="0 0 9 6"><path d="M1 1 L8 1 L4.5 3.625 Z" fill="#e8eaee"/></svg>
<div class="r" style="left:1350px;top:54px;width:16px;height:15px;background:#ffffff;"></div>
<div class="t" style="left:1370.0px;top:54.8px;font-size:12px;color:#e6e8ec;font-weight:normal;font-family:'Liberation Sans', sans-serif;font-style:normal;">ByLayer</div>
<div class="r" style="left:1350px;top:84px;width:64px;height:1px;background:#e8e8e8;"></div>
<div class="t" style="left:1416.0px;top:78.8px;font-size:12px;color:#e6e8ec;font-weight:normal;font-family:'Liberation Sans', sans-serif;font-style:normal;">ByLayer</div>
<div class="r" style="left:1350px;top:108px;width:64px;height:1px;background:#e8e8e8;"></div>
<div class="t" style="left:1416.0px;top:102.8px;font-size:12px;color:#e6e8ec;font-weight:normal;font-family:'Liberation Sans', sans-serif;font-style:normal;">ByLayer</div>
<svg class="s" style="left:1324px;top:76px;" width="18" height="18" viewBox="0 0 18 18"><g fill="#e0e0e0"><rect x="1" y="2" width="16" height="1"/><rect x="1" y="6" width="16" height="2"/><rect x="1" y="11" width="16" height="2.5"/><rect x="1" y="15" width="16" height="3"/></g></svg>
<svg class="s" style="left:1324px;top:100px;" width="18" height="18" viewBox="0 0 18 18"><g stroke="#e0e0e0" stroke-dasharray="2 1"><line x1="1" y1="3" x2="17" y2="3"/><line x1="1" y1="7" x2="17" y2="7"/><line x1="1" y1="11" x2="17" y2="11"/><line x1="1" y1="15" x2="17" y2="15"/></g></svg>
<svg class="s" style="left:1599px;top:52px;" width="18" height="18" viewBox="0 0 18 18"><path d="M1 3 L1 14 L4 11 L7 16 L9 15 L6 10 L10 10Z" fill="#eee"/><rect x="9" y="8" width="8" height="8" fill="#5ab0f0"/><path d="M8 0 L12 0 L10 4 L13 4 L8 8 L10 4 L7 4Z" fill="#f0c040"/></svg>
<svg class="s" style="left:1599px;top:76px;" width="18" height="18" viewBox="0 0 18 18"><rect x="1.5" y="1.5" width="15" height="15" stroke="#40c060" stroke-dasharray="2 1" fill="none"/><path d="M4 14 V5 H12 V14" stroke="#40c060" stroke-width="2" fill="none"/><path d="M9 7 L9 17 L11 15 L13 18 L14 17 L12 14 L15 14Z" fill="#eee"/></svg>
<svg class="s" style="left:1599px;top:100px;" width="18" height="18" viewBox="0 0 18 18"><rect x="3" y="1" width="12" height="16" fill="#d8d8d8"/><rect x="5" y="3" width="8" height="3" fill="#555"/><g fill="#666"><rect x="5" y="8" width="2" height="2"/><rect x="8" y="8" width="2" height="2"/><rect x="11" y="8" width="2" height="2"/><rect x="5" y="11" width="2" height="2"/><rect x="8" y="11" width="2" height="2"/><rect x="11" y="11" width="2" height="2"/><rect x="5" y="14" width="2" height="2"/><rect x="8" y="14" width="2" height="2"/><rect x="11" y="14" width="2" height="2"/></g></svg>
<svg class="s" style="left:1679px;top:52px;" width="18" height="18" viewBox="0 0 18 18"><rect x="1" y="1" width="13" height="14" fill="#d8d8d8"/><path d="M3 4 H11 M3 7 H9 M3 10 H8" stroke="#666"/><path d="M9 8 L16 16 M16 8 L9 16" stroke="#eee" stroke-width="1.2"/><circle cx="10" cy="16" r="2" stroke="#eee" fill="none"/><circle cx="15" cy="16" r="2" stroke="#eee" fill="none"/></svg>
<svg class="s" style="left:1679px;top:76px;" width="18" height="18" viewBox="0 0 18 18"><rect x="2" y="1" width="9" height="12" fill="#c8c8c8"/><path d="M6 5 L13 5 L16 8 L16 17 L6 17Z" fill="#e0e0e0"/></svg>
<svg class="s" style="left:1679px;top:100px;" width="18" height="18" viewBox="0 0 18 18"><rect x="1" y="1" width="13" height="14" fill="#d8d8d8"/><rect x="3" y="3" width="9" height="4" fill="#5ab0f0"/><path d="M9 15 L15 9 L17 11 L11 17Z" fill="#f0c040"/></svg>
<div class="r" style="left:0px;top:175px;width:283px;height:806px;background:#3b4453;"></div>
<div class="r" style="left:0px;top:176px;width:279px;height:22px;background:#2c323e;border-top-right-radius:4px;"></div>
<svg class="s" style="left:6px;top:181px;" width="6" height="14" viewBox="0 0 6 14"><g fill="#9aa0aa"><rect x="0" y="0" width="1.5" height="1.5"/><rect x="3" y="0" width="1.5" height="1.5"/><rect x="0" y="3" width="1.5" height="1.5"/><rect x="3" y="3" width="1.5" height="1.5"/><rect x="0" y="6" width="1.5" height="1.5"/><rect x="3" y="6" width="1.5" height="1.5"/><rect x="0" y="9" width="1.5" height="1.5"/><rect x="3" y="9" width="1.5" height="1.5"/><rect x="0" y="12" width="1.5" height="1.5"/><rect x="3" y="12" width="1.5" height="1.5"/></g></svg>
<div class="t" style="left:15.0px;top:179.3px;font-size:11.2px;color:#e6e8ec;font-weight:normal;font-family:'Liberation Sans', sans-serif;font-style:normal;">MICROVELLUM</div>
<div class="r" style="left:0px;top:197px;width:279px;height:775px;background:#f0f0f0;"></div>
<div class="r" style="left:0px;top:197px;width:44px;height:216px;background:#fafafa;"></div>
<div class="r" style="left:0px;top:413px;width:44px;height:1px;background:#c4c4c4;"></div>
<div class="r" style="left:255px;top:197px;width:24px;height:775px;background:#f8f8f8;background:linear-gradient(#fdfdfd,#f4f4f4);"></div>
<div class="r" style="left:44px;top:197px;width:1px;height:775px;background:#b4b4b4;"></div>
<div class="r" style="left:254px;top:197px;width:1px;height:775px;background:#c8c8c8;"></div>
<div class="r" style="left:45px;top:197px;width:209px;height:45px;background:#f2f2f2;"></div>
<div class="t" style="left:54.3px;top:204.2px;font-size:12px;color:#000;font-weight:normal;font-family:'Liberation Sans', sans-serif;font-style:normal;">Company Setup</div>
<div class="t" style="left:156.9px;top:204.2px;font-size:12px;color:#000;font-weight:normal;font-family:'Liberation Sans', sans-serif;font-style:normal;">Toolbox Setup</div>
<div class="r" style="left:157px;top:217px;width:6px;height:1px;background:#000;"></div>
<div class="t" style="left:54.3px;top:225.1px;font-size:12px;color:#000;font-weight:normal;font-family:'Liberation Sans', sans-serif;font-style:normal;">Other</div>
<div class="t" style="left:99.0px;top:225.1px;font-size:12px;color:#000;font-weight:normal;font-family:'Liberation Sans', sans-serif;font-style:normal;">Help</div>
<div class="r" style="left:99px;top:238px;width:8px;height:1px;background:#000;"></div>
<div class="r" style="left:45px;top:242px;width:209px;height:25px;background:#a0a0a0;"></div>
<div class="t" style="left:52.4px;top:247.3px;font-size:16px;color:#ffffff;font-weight:bold;font-family:'Liberation Sans', sans-serif;font-style:normal;">Project</div>
<div class="r" style="left:45px;top:267px;width:209px;height:196px;background:#fcfcfc;"></div>
<div class="t" style="left:55.2px;top:275.4px;font-size:11.8px;color:#000;font-weight:bold;font-family:'Liberation Sans', sans-serif;font-style:normal;">Current Configuration:</div>
<div class="t" style="left:55.2px;top:288.7px;font-size:12px;color:#3a3a4a;font-weight:normal;font-family:'Liberation Sans', sans-serif;font-style:normal;">Toolbox Imperial</div>
<div class="t" style="left:55.2px;top:324.6px;font-size:11.8px;color:#000;font-weight:bold;font-family:'Liberation Sans', sans-serif;font-style:normal;">Current Project:</div>
<div class="t" style="left:55.2px;top:337.9px;font-size:12px;color:#3a3a4a;font-weight:normal;font-family:'Liberation Sans', sans-serif;font-style:normal;">Standard Production</div>
<div class="t" style="left:55.2px;top:373.6px;font-size:11.8px;color:#000;font-weight:bold;font-family:'Liberation Sans', sans-serif;font-style:normal;">Current Room</div>
<div class="t" style="left:55.2px;top:386.9px;font-size:12px;color:#3a3a4a;font-weight:normal;font-family:'Liberation Sans', sans-serif;font-style:normal;">Standard Room</div>
<div class="t" style="left:55.2px;top:422.3px;font-size:11.8px;color:#000;font-weight:bold;font-family:'Liberation Sans', sans-serif;font-style:normal;">Current Library:</div>
<div class="t" style="left:55.2px;top:435.6px;font-size:12px;color:#3a3a4a;font-weight:normal;font-family:'Liberation Sans', sans-serif;font-style:normal;">Microvellum Foundation Library</div>
<div class="t" style="left:55.2px;top:448.1px;font-size:12px;color:#3a3a4a;font-weight:normal;font-family:'Liberation Sans', sans-serif;font-style:normal;">24.0419</div>
<div class="r" style="left:45px;top:463px;width:209px;height:366px;background:#f0f0f0;"></div>
<div class="t" style="left:79.0px;top:473.8px;font-size:12px;color:#101018;font-weight:normal;font-family:'Liberation Sans', sans-serif;font-style:normal;">Projects</div>
<div class="t" style="left:79.0px;top:502.9px;font-size:12px;color:#101018;font-weight:normal;font-family:'Liberation Sans', sans-serif;font-style:normal;">Project Properties</div>
<div class="t" style="left:79.0px;top:531.9px;font-size:12px;color:#101018;font-weight:normal;font-family:'Liberation Sans', sans-serif;font-style:normal;">New Room</div>
<div class="t" style="left:79.0px;top:561.0px;font-size:12px;color:#101018;font-weight:normal;font-family:'Liberation Sans', sans-serif;font-style:normal;">Open Room</div>
<div class="t" style="left:79.0px;top:590.0px;font-size:12px;color:#101018;font-weight:normal;font-family:'Liberation Sans', sans-serif;font-style:normal;">Copy Room</div>
<div class="t" style="left:79.0px;top:619.1px;font-size:12px;color:#101018;font-weight:normal;font-family:'Liberation Sans', sans-serif;font-style:normal;">Save Room</div>
<div class="t" style="left:79.0px;top:648.1px;font-size:12px;color:#101018;font-weight:normal;font-family:'Liberation Sans', sans-serif;font-style:normal;">Update Title Block</div>
<div class="t" style="left:79.0px;top:677.2px;font-size:12px;color:#101018;font-weight:normal;font-family:'Liberation Sans', sans-serif;font-style:normal;">Room Properties</div>
<div class="t" style="left:79.0px;top:706.2px;font-size:12px;color:#101018;font-weight:normal;font-family:'Liberation Sans', sans-serif;font-style:normal;">Change Active Library</div>
<div class="t" style="left:79.0px;top:735.3px;font-size:12px;color:#101018;font-weight:normal;font-family:'Liberation Sans', sans-serif;font-style:normal;">Product List</div>
<svg class="s" style="left:49px;top:467px;" width="25" height="26" viewBox="0 0 25 26"><rect x="1.5" y="1.5" width="21" height="15" fill="#e0e0e0" stroke="#111" stroke-width="1.6"/><path d="M12 4 L16 6 L16 11 L12 13 L8 11 L8 6Z" fill="#3a90e0"/><rect x="10.5" y="17" width="3" height="3" fill="#111"/><rect x="6" y="20" width="12" height="2" fill="#111"/></svg>
<svg class="s" style="left:49px;top:496px;" width="25" height="26" viewBox="0 0 25 26"><path d="M12 1 L14.5 1 L15 4.5 L18 6 L21 4 L22.5 6 L20.5 9 L21.5 12 L24 13 L23.5 15.5 L20.5 16 L19 19 L21 22 L19 23.5 L16 21.5 L13 22.5 L12.5 25 L10 25 L9.5 22 L6.5 20.5 L3.5 22.5 L2 20.5 L4 17.5 L3 14.5 L0.5 14 L0.5 11.5 L3.5 11 L5 8 L3 5 L5 3.5 L8 5.5 L11 4.5Z" fill="#111"/><circle cx="12.2" cy="13" r="5" fill="#f0f0f0"/></svg>
<svg class="s" style="left:49px;top:525px;" width="25" height="26" viewBox="0 0 25 26"><rect x="10.5" y="2" width="3" height="20" fill="#111"/><rect x="2" y="10.5" width="20" height="3" fill="#111"/></svg>
<svg class="s" style="left:49px;top:554px;" width="25" height="26" viewBox="0 0 25 26"><path d="M2 8 L2 20 L19 20 L23 10 L7 10 L4 19" fill="#111"/><path d="M2 7 L2 5 L8 5 L10 7 L18 7 L18 9 L6 9 L3 18 Z" fill="#111"/></svg>
<svg class="s" style="left:49px;top:583px;" width="25" height="26" viewBox="0 0 25 26"><path d="M4 2 L14 2 L14 4 L6 4 L6 20 L4 20Z" fill="#111"/><path d="M8 6 L17 6 L22 11 L22 24 L8 24Z" fill="none" stroke="#111" stroke-width="2"/></svg>
<svg class="s" style="left:49px;top:612px;" width="25" height="26" viewBox="0 0 25 26"><rect x="2" y="2" width="20" height="20" fill="#111"/><rect x="5" y="4" width="14" height="6" fill="#4a90e0"/><rect x="9" y="15" width="6" height="7" fill="#f0f0f0"/></svg>
<svg class="s" style="left:49px;top:641px;" width="25" height="26" viewBox="0 0 25 26"><path d="M1 13 L4 7 L8 7 L8 9 L5.5 9 L3.5 13 L7 13 L7 17 L17 17 L17 13 L20.5 13 L18.5 9 L16 9 L16 7 L20 7 L23 13 L23 25 L1 25Z" fill="#111"/><path d="M12 0.5 L18.5 7.5 L14.5 7.5 L14.5 15 L9.5 15 L9.5 7.5 L5.5 7.5Z" fill="#1a78d0"/></svg>
<svg class="s" style="left:49px;top:670px;" width="25" height="26" viewBox="0 0 25 26"><path d="M12 1 L14.5 1 L15 4.5 L18 6 L21 4 L22.5 6 L20.5 9 L21.5 12 L24 13 L23.5 15.5 L20.5 16 L19 19 L21 22 L19 23.5 L16 21.5 L13 22.5 L12.5 25 L10 25 L9.5 22 L6.5 20.5 L3.5 22.5 L2 20.5 L4 17.5 L3 14.5 L0.5 14 L0.5 11.5 L3.5 11 L5 8 L3 5 L5 3.5 L8 5.5 L11 4.5Z" fill="#111"/><circle cx="12.2" cy="13" r="5" fill="#f0f0f0"/></svg>
<svg class="s" style="left:49px;top:699px;" width="25" height="26" viewBox="0 0 25 26"><path d="M22 7.5 H8" stroke="#111" stroke-width="3.4"/><path d="M1.5 7.5 L9.5 1.5 L9.5 13.5Z" fill="#111"/><path d="M2 18 H16" stroke="#1a5cb0" stroke-width="3.4"/><path d="M23 18 L15 12 L15 24Z" fill="#1a5cb0"/></svg>
<svg class="s" style="left:49px;top:728px;" width="25" height="26" viewBox="0 0 25 26"><rect x="1.5" y="2.5" width="21" height="19" fill="#fff" stroke="#111" stroke-width="1.2"/><g stroke="#111" stroke-width="0.9"><line x1="1.5" y1="7" x2="22.5" y2="7"/><line x1="1.5" y1="11" x2="22.5" y2="11"/><line x1="1.5" y1="15" x2="22.5" y2="15"/><line x1="1.5" y1="18.5" x2="22.5" y2="18.5"/><line x1="7" y1="2.5" x2="7" y2="21.5"/><line x1="12" y1="2.5" x2="12" y2="21.5"/><line x1="17" y1="2.5" x2="17" y2="21.5"/></g><rect x="1.5" y="2.5" width="4" height="3" fill="#1a70c8"/></svg>
<div class="r" style="left:45px;top:828px;width:209px;height:1px;background:#bcbcbc;"></div>
<div class="r" style="left:45px;top:829px;width:209px;height:23px;background:#d9e8f8;"></div>
<div class="r" style="left:45px;top:852px;width:209px;height:1px;background:#c0c0c0;"></div>
<div class="r" style="left:45px;top:853px;width:209px;height:23px;background:#f4f4f4;background:linear-gradient(#fafafa,#ececec);"></div>
<div class="r" style="left:45px;top:876px;width:209px;height:1px;background:#c0c0c0;"></div>
<div class="r" style="left:45px;top:877px;width:209px;height:23px;background:#f4f4f4;background:linear-gradient(#fafafa,#ececec);"></div>
<div class="r" style="left:45px;top:900px;width:209px;height:1px;background:#c0c0c0;"></div>
<div class="r" style="left:45px;top:901px;width:209px;height:23px;background:#f4f4f4;background:linear-gradient(#fafafa,#ececec);"></div>
<div class="r" style="left:45px;top:924px;width:209px;height:1px;background:#c0c0c0;"></div>
<div class="r" style="left:45px;top:925px;width:209px;height:23px;background:#f4f4f4;background:linear-gradient(#fafafa,#ececec);"></div>
<div class="r" style="left:45px;top:948px;width:209px;height:1px;background:#c0c0c0;"></div>
<div class="r" style="left:45px;top:949px;width:209px;height:23px;background:#f8f8f8;"></div>
<div class="t" style="left:55.5px;top:833.8px;font-size:12px;color:#000;font-weight:bold;font-family:'Liberation Sans', sans-serif;font-style:normal;">Project</div>
<div class="t" style="left:55.5px;top:857.8px;font-size:12px;color:#000;font-weight:bold;font-family:'Liberation Sans', sans-serif;font-style:normal;">Draw</div>
<div class="t" style="left:55.5px;top:881.8px;font-size:12px;color:#000;font-weight:bold;font-family:'Liberation Sans', sans-serif;font-style:normal;">Modify</div>
<div class="t" style="left:56.3px;top:905.8px;font-size:12px;color:#000;font-weight:bold;font-family:'Liberation Sans', sans-serif;font-style:normal;">Solid Modeling</div>
<div class="t" style="left:55.5px;top:929.8px;font-size:12px;color:#000;font-weight:bold;font-family:'Liberation Sans', sans-serif;font-style:normal;">Product Viewer</div>
<svg class="s" style="left:3px;top:200px;" width="38" height="32" viewBox="0 0 38 32"><rect x="0.5" y="0.5" width="37" height="31" fill="#0c86ee" stroke="#0a1e40" stroke-width="1"/><rect x="1" y="22" width="36" height="9" fill="#1a98f8" opacity="0.7"/><path d="M22 4 L29 10 L16 23 L11 22 L10 17Z" fill="#fff"/><path d="M10 18 L6 24 L12 23Z" fill="#fff"/><rect x="6" y="25" width="14" height="1.6" fill="#fff"/></svg>
<div class="r" style="left:0px;top:233px;width:44px;height:1px;background:#d4d4d4;"></div>
<svg class="s" style="left:3px;top:236px;" width="38" height="32" viewBox="0 0 38 32"><rect x="0.5" y="0.5" width="37" height="31" fill="#0c86ee" stroke="#0a1e40" stroke-width="1"/><rect x="1" y="22" width="36" height="9" fill="#1a98f8" opacity="0.7"/><path d="M19 6 Q28 8 27 17 Q26 25 18 26 Q10 26 9 19 Q9 13 15 12 Q21 12 21 17 Q21 21 17 21 Q14 21 14 18" stroke="#fff" stroke-width="2" fill="none"/></svg>
<div class="r" style="left:0px;top:269px;width:44px;height:1px;background:#d4d4d4;"></div>
<svg class="s" style="left:3px;top:272px;" width="38" height="32" viewBox="0 0 38 32"><rect x="0.5" y="0.5" width="37" height="31" fill="#0c86ee" stroke="#0a1e40" stroke-width="1"/><rect x="1" y="22" width="36" height="9" fill="#1a98f8" opacity="0.7"/><path d="M19 5 L29 10 L19 15 L9 10Z" fill="#fff"/><path d="M9 11 L18.5 16 L18.5 27 L9 22Z" fill="#dde8f4"/><path d="M19.5 16 L29 11 L29 22 L19.5 27Z" fill="#b8d0ea"/></svg>
<div class="r" style="left:0px;top:305px;width:44px;height:1px;background:#d4d4d4;"></div>
<svg class="s" style="left:3px;top:308px;" width="38" height="32" viewBox="0 0 38 32"><rect x="0.5" y="0.5" width="37" height="31" fill="#0c86ee" stroke="#0a1e40" stroke-width="1"/><rect x="1" y="22" width="36" height="9" fill="#1a98f8" opacity="0.7"/><path d="M8 11 L13 11 L15 8 L23 8 L25 11 L30 11 L30 25 L8 25Z" fill="#fff"/><circle cx="19" cy="18" r="4.5" fill="#0c86ee"/><circle cx="19" cy="18" r="2.8" fill="#fff"/><circle cx="11" cy="13.5" r="1" fill="#0c86ee"/></svg>
<div class="r" style="left:0px;top:341px;width:44px;height:1px;background:#d4d4d4;"></div>
<svg class="s" style="left:3px;top:344px;" width="38" height="32" viewBox="0 0 38 32"><rect x="0.5" y="0.5" width="37" height="31" fill="#0c86ee" stroke="#0a1e40" stroke-width="1"/><rect x="1" y="22" width="36" height="9" fill="#1a98f8" opacity="0.7"/><path d="M8 10 L15 10 L17 8 L24 8 L24 25 L8 25Z" fill="#fff"/><path d="M25 15 L27 20 L31 20 L28 23 L29 28 L25 25 L21 28 L22 23 L19 20 L23 20Z" fill="#fff" stroke="#0c86ee" stroke-width="1"/></svg>
<div class="r" style="left:0px;top:377px;width:44px;height:1px;background:#d4d4d4;"></div>
<svg class="s" style="left:3px;top:380px;" width="38" height="32" viewBox="0 0 38 32"><rect x="0.5" y="0.5" width="37" height="31" fill="#0c86ee" stroke="#0a1e40" stroke-width="1"/><rect x="1" y="22" width="36" height="9" fill="#1a98f8" opacity="0.7"/><path d="M18 4 L21 4 L22 8 L25 9.5 L28.5 7 L31 9.5 L28.5 13 L30 16 L33 17 L33 20 L30 21 L28.5 24 L31 27.5 L28.5 30 L25 27.5 L22 29 L21 32 L18 32 L17 29 L14 27.5 L10.5 30 L8 27.5 L10.5 24 L9 21 L6 20 L6 17 L9 16 L10.5 13 L8 9.5 L10.5 7 L14 9.5 L17 8Z" fill="#fff" transform="translate(0,-1) scale(0.95)"/><circle cx="18.5" cy="17" r="5" fill="#0c86ee"/></svg>
<svg class="s" style="left:4px;top:417px;" width="34" height="4" viewBox="0 0 34 4"><g fill="#a8a8a8"><rect x="0" y="0" width="2" height="2"/><rect x="4" y="0" width="2" height="2"/><rect x="8" y="0" width="2" height="2"/><rect x="12" y="0" width="2" height="2"/><rect x="16" y="0" width="2" height="2"/><rect x="20" y="0" width="2" height="2"/><rect x="24" y="0" width="2" height="2"/><rect x="28" y="0" width="2" height="2"/></g></svg>
<div class="r" style="left:2px;top:520px;width:38px;height:1px;background:#c0c0c0;"></div>
<svg class="s" style="left:9px;top:426px;" width="25" height="25" viewBox="0 0 25 25"><path d="M3 4 L8 4 L8 2 L14 2 L14 4 L19 4 L19 24 L3 24Z" fill="#fff" stroke="#111" stroke-width="1.8"/><rect x="8" y="1" width="6" height="4" fill="#111"/><path d="M12 13 L20 13 L23 16 L23 24 L12 24Z" fill="#444"/><path d="M14 17 H21 M14 20 H21" stroke="#ccc"/></svg>
<svg class="s" style="left:9px;top:459px;" width="25" height="25" viewBox="0 0 25 25"><rect x="1" y="1" width="22" height="20" fill="#fff" stroke="#111" stroke-width="1.8"/><rect x="2" y="2" width="20" height="3" fill="#3a90e0"/><rect x="8" y="8" width="8" height="7" fill="#fff" stroke="#111" stroke-width="1.6"/><path d="M1 11.5 H8 M16 11.5 H23 M12 5 V8 M12 15 V21" stroke="#111" stroke-width="1.4"/></svg>
<svg class="s" style="left:9px;top:488px;" width="25" height="25" viewBox="0 0 25 25"><path d="M7 4 H11 V2 H15 V4 H21 V24 H7Z" fill="#fff" stroke="#111" stroke-width="1.8"/><rect x="10" y="1" width="6" height="4" fill="#111"/><path d="M2.5 12.5 L12 22" stroke="#111" stroke-width="4"/><path d="M11 21 L14 24 L10 24Z" fill="#111"/><path d="M2.5 12.5 L4.5 14.5" stroke="#fff" stroke-width="1"/></svg>
<svg class="s" style="left:9px;top:529px;" width="25" height="25" viewBox="0 0 25 25"><path d="M1 4 L1 14 L19 14 L23 6 L6 6 L3 13" fill="#111"/><path d="M1 3 L1 1.5 L7 1.5 L9 3 L17 3 L17 5 L5 5 L2 12Z" fill="#111"/></svg>
<svg class="s" style="left:9px;top:552px;" width="25" height="25" viewBox="0 0 25 25"><path d="M2 1 L6 1 L6 19 L23 19 L23 23 L2 23Z" fill="#f0e000" stroke="#111" stroke-width="1.2"/><g stroke="#111" stroke-width="0.8"><line x1="2" y1="5" x2="4" y2="5"/><line x1="2" y1="9" x2="4" y2="9"/><line x1="2" y1="13" x2="4" y2="13"/><line x1="9" y1="23" x2="9" y2="21"/><line x1="13" y1="23" x2="13" y2="21"/><line x1="17" y1="23" x2="17" y2="21"/></g><circle cx="15" cy="8" r="5.5" fill="#fff" stroke="#111" stroke-width="1.6"/><rect x="13" y="6" width="4" height="4" fill="none" stroke="#111"/><path d="M15 1 V3 M15 13 V15 M8 8 H10 M20 8 H22" stroke="#111" stroke-width="1.4"/></svg>
<svg class="s" style="left:9px;top:581px;" width="25" height="25" viewBox="0 0 25 25"><path d="M2 1 L14 1 L19 6 L19 23 L2 23Z" fill="#fff" stroke="#111" stroke-width="1.8"/><g stroke="#30a030" stroke-width="1.8"><line x1="5" y1="6" x2="12" y2="6"/><line x1="5" y1="10" x2="15" y2="10"/><line x1="5" y1="14" x2="12" y2="14"/><line x1="5" y1="18" x2="10" y2="18"/></g><path d="M17 13 V23 M12 18 H22" stroke="#111" stroke-width="3.2"/></svg>
<svg class="s" style="left:9px;top:609px;" width="25" height="25" viewBox="0 0 25 25"><path d="M2 1 L14 1 L19 6 L19 23 L2 23Z" fill="#fff" stroke="#111" stroke-width="1.8"/><g stroke="#30a030" stroke-width="1.8"><line x1="5" y1="6" x2="12" y2="6"/><line x1="5" y1="10" x2="15" y2="10"/><line x1="5" y1="14" x2="12" y2="14"/><line x1="5" y1="18" x2="10" y2="18"/></g><path d="M17 12 L22 17 L19 17 L19 23 L15 23 L15 17 L12 17Z" fill="#111"/></svg>
<svg class="s" style="left:9px;top:636px;" width="25" height="25" viewBox="0 0 25 25"><rect x="6" y="1" width="12" height="6" fill="#fff" stroke="#111" stroke-width="1.6"/><rect x="1" y="6" width="22" height="10" rx="2" fill="#111"/><rect x="6" y="12" width="12" height="9" fill="#fff" stroke="#111" stroke-width="1.6"/><path d="M8 15 H16 M8 18 H16" stroke="#111"/></svg>
<svg class="s" style="left:256px;top:200px;" width="22" height="4" viewBox="0 0 22 4"><g fill="#a0a0a0"><rect x="4" y="1" width="2" height="2"/><rect x="8" y="1" width="2" height="2"/><rect x="12" y="1" width="2" height="2"/><rect x="16" y="1" width="2" height="2"/><rect x="20" y="1" width="2" height="2"/></g></svg>
<svg class="s" style="left:259px;top:210px;" width="16" height="16" viewBox="0 0 16 16"><path d="M6.8 0.5 L9.2 0.5 L9.6 2.6 L11.4 3.4 L13.2 2.2 L14.8 3.8 L13.6 5.6 L14.4 7.4 L16 7.8 L16 10.2 L14.4 10.6 L13.6 12.4 L14.8 14.2 L13.2 15.8 L11.4 14.6 L9.6 15.4 L9.2 17 L6.8 17 L6.4 15.4 L4.6 14.6 L2.8 15.8 L1.2 14.2 L2.4 12.4 L1.6 10.6 L0 10.2 L0 7.8 L1.6 7.4 L2.4 5.6 L1.2 3.8 L2.8 2.2 L4.6 3.4 L6.4 2.6Z" fill="#111" transform="scale(0.95)"/><circle cx="7.6" cy="8.6" r="3.2" fill="#f0f0f0"/></svg>
<div class="r" style="left:257px;top:227px;width:21px;height:1px;background:#c8c8c8;"></div>
<svg class="s" style="left:258px;top:240px;" width="20" height="24" viewBox="0 0 20 24"><path d="M2 1 L16 1 L16 18 L12 22 L2 22Z" fill="#fff" stroke="#111" stroke-width="1.5"/><rect x="4" y="3" width="10" height="1.5" fill="#3a90e0"/><rect x="6" y="7" width="5" height="4" fill="none" stroke="#3a90e0"/><rect x="6" y="13" width="5" height="4" fill="none" stroke="#3a90e0"/></svg>
<svg class="s" style="left:256px;top:269px;" width="24" height="26" viewBox="0 0 24 26"><path d="M12 1 L14.5 1 L15 4.5 L18 6 L21 4 L22.5 6 L20.5 9 L21.5 12 L24 13 L23.5 15.5 L20.5 16 L19 19 L21 22 L19 23.5 L16 21.5 L13 22.5 L12.5 25 L10 25 L9.5 22 L6.5 20.5 L3.5 22.5 L2 20.5 L4 17.5 L3 14.5 L0.5 14 L0.5 11.5 L3.5 11 L5 8 L3 5 L5 3.5 L8 5.5 L11 4.5Z" fill="#111"/><circle cx="12.2" cy="13" r="5.5" fill="#f0f0f0"/></svg>
<svg class="s" style="left:257px;top:303px;" width="22" height="22" viewBox="0 0 22 22"><rect x="1" y="1" width="20" height="20" fill="#fff" stroke="#222" stroke-width="1.2"/><g stroke="#333" stroke-width="0.8"><line x1="1" y1="5" x2="21" y2="5"/><line x1="1" y1="9" x2="21" y2="9"/><line x1="1" y1="13" x2="21" y2="13"/><line x1="1" y1="17" x2="21" y2="17"/><line x1="6" y1="1" x2="6" y2="21"/><line x1="11" y1="1" x2="11" y2="21"/><line x1="16" y1="1" x2="16" y2="21"/></g><rect x="11" y="5" width="5" height="16" fill="#6aa8e8" opacity="0.6"/><rect x="1" y="1" width="3" height="3" fill="#30b030"/></svg>
<svg class="s" style="left:257px;top:333px;" width="22" height="22" viewBox="0 0 22 22"><path d="M1 1 L10 1 L10 8 L21 8 L21 21 L1 21Z" fill="#fff" stroke="#222" stroke-width="1.3"/><path d="M10 1 L10 8 L21 8" stroke="#30b030" stroke-width="1.3" fill="none"/><path d="M4 15 H18" stroke="#3a90e0" stroke-dasharray="1.5 1.5"/></svg>
<svg class="s" style="left:257px;top:363px;" width="22" height="26" viewBox="0 0 22 26"><path d="M17 2 L21 6 L10 19 L5 19 L5 15Z" fill="#111"/><path d="M5 19 L1 24 L7 23Z" fill="#111"/><rect x="1" y="24" width="18" height="1.5" fill="#111"/></svg>
<svg class="s" style="left:256px;top:956px;" width="24" height="14" viewBox="0 0 24 14"><g stroke="#333" stroke-width="1.4" fill="none"><path d="M6 3 L2.5 7 L6 11"/><path d="M16 3 L19.5 7 L16 11"/></g></svg>
<div class="r" style="left:1903px;top:174px;width:17px;height:725px;background:#f0f0f0;"></div>
<div class="r" style="left:1905px;top:191px;width:13px;height:17px;background:#cdcdcd;"></div>
<svg class="s" style="left:1905px;top:178px;" width="13" height="12" viewBox="0 0 13 12"><path d="M2.5 8 L6.5 4 L10.5 8" stroke="#333" stroke-width="1.6" fill="none"/></svg>
<svg class="s" style="left:1905px;top:885px;" width="13" height="12" viewBox="0 0 13 12"><path d="M2.5 4 L6.5 8 L10.5 4" stroke="#333" stroke-width="1.6" fill="none"/></svg>
<div class="r" style="left:283px;top:899px;width:1620px;height:17px;background:#f0f0f0;"></div>
<div class="r" style="left:1083px;top:901px;width:17px;height:13px;background:#cdcdcd;"></div>
<svg class="s" style="left:285px;top:900px;" width="14" height="14" viewBox="0 0 14 14"><path d="M8.5 3 L4.5 7 L8.5 11" stroke="#333" stroke-width="1.6" fill="none"/></svg>
<svg class="s" style="left:1888px;top:900px;" width="14" height="14" viewBox="0 0 14 14"><path d="M5 3 L9 7 L5 11" stroke="#333" stroke-width="1.6" fill="none"/></svg>
<div class="r" style="left:1903px;top:899px;width:17px;height:17px;background:#f0f0f0;"></div>
<div class="r" style="left:283px;top:916px;width:1637px;height:65px;background:#3b4453;"></div>
<div class="r" style="left:283px;top:921px;width:25px;height:56px;background:#2c323e;"></div>
<div class="r" style="left:308px;top:921px;width:1610px;height:35px;background:#c8c8c8;"></div>
<div class="r" style="left:308px;top:956px;width:1610px;height:21px;background:#fefefe;"></div>
<div class="r" style="left:308px;top:956px;width:1610px;height:1px;background:#4a4f58;"></div>
<svg class="s" style="left:286px;top:924px;" width="20" height="8" viewBox="0 0 20 8"><g fill="#d8dce2"><rect x="1" y="1" width="2" height="2"/><rect x="4" y="1" width="2" height="2"/><rect x="7" y="1" width="2" height="2"/><rect x="10" y="1" width="2" height="2"/><rect x="13" y="1" width="2" height="2"/><rect x="16" y="1" width="2" height="2"/><rect x="1" y="4" width="2" height="2"/><rect x="4" y="4" width="2" height="2"/><rect x="7" y="4" width="2" height="2"/><rect x="10" y="4" width="2" height="2"/><rect x="13" y="4" width="2" height="2"/><rect x="16" y="4" width="2" height="2"/></g></svg>
<svg class="s" style="left:288px;top:937px;" width="14" height="12" viewBox="0 0 14 12"><g stroke="#d8dce2" stroke-width="1.8"><line x1="2" y1="2" x2="10" y2="10"/><line x1="10" y1="2" x2="2" y2="10"/></g></svg>
<svg class="s" style="left:286px;top:958px;" width="20" height="18" viewBox="0 0 20 18"><path d="M3 16 L11 8" stroke="#d8dce2" stroke-width="2.6"/><path d="M10 9 Q8 4 12 2 L14 1 L13 4 L15 6 L18 5 Q18 9 13 10Z" fill="#d8dce2"/></svg>
<div class="t" style="left:310.0px;top:926.4px;font-size:11.67px;color:#111;font-weight:normal;font-family:'Liberation Mono', monospace;font-style:normal;">Command: *Cancel*</div>
<div class="t" style="left:310.0px;top:941.4px;font-size:11.67px;color:#111;font-weight:normal;font-family:'Liberation Mono', monospace;font-style:normal;">Command: Specify opposite corner or [Fence/WPolygon/CPolygon]:</div>
<svg class="s" style="left:311px;top:959px;" width="30" height="15" viewBox="0 0 30 15"><rect x="1.5" y="1.5" width="15" height="11" fill="#fff" stroke="#555" stroke-width="1"/><rect x="1.5" y="1.5" width="15" height="2" fill="#555"/><path d="M4 6 L6 8 L4 10 M7 10 H10" stroke="#333" fill="none" stroke-width="0.9"/><path d="M20 6 L27 6 L23.5 10Z" fill="#555"/></svg>
<div class="t" style="left:344.5px;top:962.4px;font-size:11.67px;color:#8a8a8a;font-weight:normal;font-family:'Liberation Mono', monospace;font-style:italic;">Type a command</div>
<div class="r" style="left:0px;top:975px;width:283px;height:7px;background:#3b4453;"></div>
<div class="r" style="left:283px;top:977px;width:1637px;height:5px;background:#3b4453;"></div>
<div class="r" style="left:0px;top:972px;width:279px;height:4px;background:#2a303a;border-bottom-right-radius:3px;"></div>
<div class="r" style="left:0px;top:982px;width:1920px;height:24px;background:#222831;"></div>
<svg class="s" style="left:14px;top:986px;" width="20" height="16" viewBox="0 0 20 16"><g fill="#e8e8e8"><rect x="2" y="1.5" width="16" height="2"/><rect x="2" y="7" width="16" height="2"/><rect x="2" y="12.5" width="16" height="2"/></g></svg>
<svg class="s" style="left:40px;top:982px;" width="72" height="24" viewBox="0 0 72 24"><path d="M10 0 L70 0 L61 24 L1 24Z" fill="#3b4453"/></svg>
<div class="t" style="left:58.0px;top:989.0px;font-size:12px;color:#ffffff;font-weight:bold;font-family:'Liberation Sans', sans-serif;font-style:normal;">Model</div>
<div class="t" style="left:117.4px;top:989.0px;font-size:12px;color:#e8eaee;font-weight:normal;font-family:'Liberation Sans', sans-serif;font-style:normal;transform:scaleX(0.86);transform-origin:0 0;">COVER</div>
<div class="t" style="left:178.0px;top:989.0px;font-size:12px;color:#e8eaee;font-weight:normal;font-family:'Liberation Sans', sans-serif;font-style:normal;transform:scaleX(0.86);transform-origin:0 0;">SH01</div>
<div class="t" style="left:229.0px;top:989.0px;font-size:12px;color:#e8eaee;font-weight:normal;font-family:'Liberation Sans', sans-serif;font-style:normal;transform:scaleX(0.86);transform-origin:0 0;">SH02</div>
<div class="t" style="left:280.4px;top:989.0px;font-size:12px;color:#e8eaee;font-weight:normal;font-family:'Liberation Sans', sans-serif;font-style:normal;transform:scaleX(0.86);transform-origin:0 0;">DETAIL</div>
<div class="t" style="left:340.0px;top:989.0px;font-size:12px;color:#e8eaee;font-weight:normal;font-family:'Liberation Sans', sans-serif;font-style:normal;transform:scaleX(0.86);transform-origin:0 0;">3D</div>
<div class="t" style="left:378.0px;top:989.0px;font-size:12px;color:#e8eaee;font-weight:normal;font-family:'Liberation Sans', sans-serif;font-style:normal;transform:scaleX(0.86);transform-origin:0 0;">VBASE</div>
<svg class="s" style="left:160px;top:984px;" width="320" height="22" viewBox="0 0 320 22"><g stroke="#5a6270" stroke-width="1"><line x1="3.5" y1="20" x2="9.5" y2="4"/><line x1="52" y1="20" x2="58" y2="4"/><line x1="103" y1="20" x2="109" y2="4"/><line x1="163" y1="20" x2="169" y2="4"/><line x1="204" y1="20" x2="210" y2="4"/><line x1="260" y1="20" x2="266" y2="4"/><line x1="304" y1="20" x2="310" y2="4"/></g></svg>
<svg class="s" style="left:437px;top:987px;" width="16" height="16" viewBox="0 0 16 16"><g stroke="#f0f0f0" stroke-width="1.8"><line x1="8" y1="1" x2="8" y2="15"/><line x1="1" y1="8" x2="15" y2="8"/></g></svg>
<div class="r" style="left:1300px;top:984px;width:47px;height:22px;background:#3b4453;"></div>
<div class="r" style="left:1350px;top:984px;width:64px;height:22px;background:#3b4453;"></div>
<div class="r" style="left:1417px;top:984px;width:169px;height:22px;background:#3b4453;"></div>
<div class="r" style="left:1589px;top:984px;width:156px;height:22px;background:#3b4453;"></div>
<div class="r" style="left:1748px;top:984px;width:40px;height:22px;background:#3b4453;"></div>
<div class="r" style="left:1790px;top:984px;width:23px;height:22px;background:#3b4453;"></div>
<div class="r" style="left:1816px;top:984px;width:24px;height:22px;background:#3b4453;"></div>
<div class="r" style="left:1843px;top:984px;width:22px;height:22px;background:#3b4453;"></div>
<div class="r" style="left:1868px;top:984px;width:24px;height:22px;background:#3b4453;"></div>
<div class="r" style="left:1894px;top:984px;width:24px;height:22px;background:#3b4453;"></div>
<div class="r" style="left:1523px;top:985px;width:22px;height:21px;background:#5a8ad0;"></div>
<div class="r" style="left:1590px;top:985px;width:22px;height:21px;background:#5a8ad0;"></div>
<div class="t" style="left:1303.0px;top:989.8px;font-size:12px;color:#e8eaee;font-weight:normal;font-family:'Liberation Sans', sans-serif;font-style:normal;">MODEL</div>
<div class="t" style="left:1666.0px;top:989.8px;font-size:12px;color:#e8eaee;font-weight:normal;font-family:'Liberation Sans', sans-serif;font-style:normal;">3/8&quot; = 1'-0&quot;</div>
<svg class="s" style="left:1353px;top:985px;" width="20" height="20" viewBox="0 0 20 20"><g stroke="#e0e0e0" stroke-width="1.2"><line x1="6" y1="3" x2="6" y2="17"/><line x1="10" y1="3" x2="10" y2="17"/><line x1="14" y1="3" x2="14" y2="17"/><line x1="3" y1="6" x2="17" y2="6"/><line x1="3" y1="10" x2="17" y2="10"/><line x1="3" y1="14" x2="17" y2="14"/></g></svg>
<svg class="s" style="left:1377px;top:985px;" width="20" height="20" viewBox="0 0 20 20"><g fill="#e0e0e0"><rect x="3" y="4" width="2" height="2"/><rect x="9" y="4" width="2" height="2"/><rect x="15" y="4" width="2" height="2"/><rect x="3" y="9" width="2" height="2"/><rect x="9" y="9" width="2" height="2"/><rect x="15" y="9" width="2" height="2"/><rect x="3" y="14" width="2" height="2"/><rect x="9" y="14" width="2" height="2"/><rect x="15" y="14" width="2" height="2"/></g></svg>
<svg class="s" style="left:1402px;top:992px;" width="9" height="6" viewBox="0 0 9 6"><path d="M0.5 1 L8.5 1 L4.5 5Z" fill="#e0e0e0"/></svg>
<svg class="s" style="left:1472px;top:992px;" width="9" height="6" viewBox="0 0 9 6"><path d="M0.5 1 L8.5 1 L4.5 5Z" fill="#e0e0e0"/></svg>
<svg class="s" style="left:1508px;top:992px;" width="9" height="6" viewBox="0 0 9 6"><path d="M0.5 1 L8.5 1 L4.5 5Z" fill="#e0e0e0"/></svg>
<svg class="s" style="left:1574px;top:992px;" width="9" height="6" viewBox="0 0 9 6"><path d="M0.5 1 L8.5 1 L4.5 5Z" fill="#e0e0e0"/></svg>
<svg class="s" style="left:1733px;top:992px;" width="9" height="6" viewBox="0 0 9 6"><path d="M0.5 1 L8.5 1 L4.5 5Z" fill="#e0e0e0"/></svg>
<svg class="s" style="left:1775px;top:992px;" width="9" height="6" viewBox="0 0 9 6"><path d="M0.5 1 L8.5 1 L4.5 5Z" fill="#e0e0e0"/></svg>
<svg class="s" style="left:1420px;top:985px;" width="20" height="20" viewBox="0 0 20 20"><path d="M3 2 V17 H17 M3 12 H7 V17" stroke="#e0e0e0" stroke-width="1.2" fill="none"/></svg>
<svg class="s" style="left:1444px;top:985px;" width="20" height="20" viewBox="0 0 20 20"><circle cx="9" cy="11" r="6" stroke="#e0e0e0" stroke-width="1.2" fill="none"/><path d="M9 11 L16 5 M9 11 H17" stroke="#e0e0e0" stroke-width="1.2"/></svg>
<svg class="s" style="left:1484px;top:985px;" width="20" height="20" viewBox="0 0 20 20"><line x1="4" y1="3" x2="16" y2="17" stroke="#e04848" stroke-width="1.3"/><line x1="10" y1="2" x2="10" y2="18" stroke="#40c060" stroke-width="1.3"/><circle cx="10" cy="10" r="1.8" fill="#333" stroke="#fff"/></svg>
<svg class="s" style="left:1524px;top:985px;" width="20" height="20" viewBox="0 0 20 20"><path d="M3 17 H18 M3 17 L15 6" stroke="#f0f0f0" stroke-width="1.3"/><circle cx="9.5" cy="11.5" r="1.6" fill="#fff"/></svg>
<svg class="s" style="left:1547px;top:985px;" width="20" height="20" viewBox="0 0 20 20"><rect x="7" y="6" width="10" height="12" stroke="#e0e0e0" stroke-width="1.2" fill="none"/><rect x="3" y="2" width="4" height="4" stroke="#f0a040" fill="none"/></svg>
<svg class="s" style="left:1592px;top:985px;" width="20" height="20" viewBox="0 0 20 20"><path d="M10 3 L14 13 L12 17 L10 14 L8 17 L6 13Z" fill="#fff"/><circle cx="15" cy="5" r="2.5" stroke="#fff" fill="none"/></svg>
<svg class="s" style="left:1616px;top:985px;" width="20" height="20" viewBox="0 0 20 20"><path d="M9 4 L13 13 L11 17 L9 14 L7 17 L5 13Z" fill="#d0d0d0"/><path d="M15 2 L13 6 L16 6 L14 10" stroke="#d0d0d0" fill="none"/></svg>
<svg class="s" style="left:1638px;top:985px;" width="20" height="20" viewBox="0 0 20 20"><path d="M10 3 L14 13 L12 17 L10 14 L8 17 L6 13Z" fill="#d0d0d0"/></svg>
<svg class="s" style="left:1750px;top:985px;" width="20" height="20" viewBox="0 0 20 20"><circle cx="10" cy="10" r="6.5" fill="#d0d0d0"/><circle cx="10" cy="10" r="2.5" fill="#3b4453"/><g stroke="#d0d0d0" stroke-width="2.6"><line x1="10" y1="2" x2="10" y2="18"/><line x1="2" y1="10" x2="18" y2="10"/><line x1="4.5" y1="4.5" x2="15.5" y2="15.5"/><line x1="15.5" y1="4.5" x2="4.5" y2="15.5"/></g><circle cx="10" cy="10" r="2.5" fill="#3b4453"/></svg>
<svg class="s" style="left:1791px;top:985px;" width="20" height="20" viewBox="0 0 20 20"><path d="M10 3 V17 M3 10 H17" stroke="#e0e0e0" stroke-width="1.8"/></svg>
<svg class="s" style="left:1818px;top:985px;" width="20" height="20" viewBox="0 0 20 20"><rect x="2" y="2" width="6" height="6" stroke="#e0e0e0" fill="none"/><circle cx="15" cy="8" r="3" stroke="#e0e0e0" fill="none"/><path d="M8 12 L11 17 L5 17Z" stroke="#e0e0e0" fill="none"/></svg>
<svg class="s" style="left:1845px;top:985px;" width="20" height="20" viewBox="0 0 20 20"><rect x="3" y="3" width="13" height="11" fill="#3a70c0"/><circle cx="6" cy="5" r="2" stroke="#fff" fill="none"/><path d="M3 13 L9 13 L9 17 L3 17Z" fill="#f0c040"/><path d="M9 14 L12 17 L18 10" stroke="#40c060" stroke-width="2" fill="none"/></svg>
<svg class="s" style="left:1870px;top:985px;" width="20" height="20" viewBox="0 0 20 20"><rect x="3" y="4" width="15" height="12" stroke="#e0e0e0" stroke-width="1.2" fill="none"/><path d="M6 13 L9 10 M6 13 H8.5 M6 13 V10.5 M15 7 L12 10 M15 7 H12.5 M15 7 V9.5" stroke="#e0e0e0" fill="none"/></svg>
<svg class="s" style="left:1897px;top:985px;" width="20" height="20" viewBox="0 0 20 20"><g fill="#e8e8e8"><rect x="2" y="3" width="16" height="2"/><rect x="2" y="9" width="16" height="2"/><rect x="2" y="15" width="16" height="2"/></g></svg>
<div class="t" style="left:286.7px;top:181.8px;font-size:12px;color:#e0e2e6;font-weight:normal;font-family:'Liberation Sans', sans-serif;font-style:normal;">[−][Custom View][2D Wireframe]</div>
<svg class="s" style="left:0;top:0" width="1920" height="1006" viewBox="0 0 1920 1006"><g shape-rendering="crispEdges"><line x1="416.3" y1="556.0" x2="916.7" y2="293.4" stroke="#f4f4f4" stroke-width="1.0" /><line x1="422.3" y1="558.4" x2="916.7" y2="298.9" stroke="#f4f4f4" stroke-width="1.0" /><line x1="916.7" y1="293.4" x2="1764.3" y2="636.4" stroke="#f4f4f4" stroke-width="1.0" /><line x1="916.7" y1="298.9" x2="1758.3" y2="639.5" stroke="#f4f4f4" stroke-width="1.0" /><line x1="416.3" y1="556.0" x2="422.3" y2="558.4" stroke="#f4f4f4" stroke-width="1.0" /><line x1="1764.3" y1="636.4" x2="1758.3" y2="639.5" stroke="#f4f4f4" stroke-width="1.0" /><line x1="416.3" y1="701.5" x2="916.7" y2="438.9" stroke="#f4f4f4" stroke-width="1.0" /><line x1="422.3" y1="703.9" x2="916.7" y2="444.4" stroke="#f4f4f4" stroke-width="1.0" /><line x1="916.7" y1="438.9" x2="1764.3" y2="781.9" stroke="#f4f4f4" stroke-width="1.0" /><line x1="916.7" y1="444.4" x2="1758.3" y2="785.0" stroke="#f4f4f4" stroke-width="1.0" /><line x1="416.3" y1="701.5" x2="422.3" y2="703.9" stroke="#f4f4f4" stroke-width="1.0" /><line x1="1764.3" y1="781.9" x2="1758.3" y2="785.0" stroke="#f4f4f4" stroke-width="1.0" /><line x1="416.3" y1="556.0" x2="416.3" y2="701.5" stroke="#f4f4f4" stroke-width="1.0" /><line x1="422.3" y1="558.4" x2="422.3" y2="703.9" stroke="#f4f4f4" stroke-width="1.0" /><line x1="916.7" y1="293.4" x2="916.7" y2="438.9" stroke="#f4f4f4" stroke-width="1.0" /><line x1="916.7" y1="298.9" x2="916.7" y2="444.4" stroke="#f4f4f4" stroke-width="1.0" /><line x1="1764.3" y1="636.4" x2="1764.3" y2="781.9" stroke="#f4f4f4" stroke-width="1.0" /><line x1="1758.3" y1="639.5" x2="1758.3" y2="785.0" stroke="#f4f4f4" stroke-width="1.0" /><polyline points="415.3,701.0 385.0,689.6 880.0,430.2 907.0,440.0" stroke="#ee8a1c" stroke-width="1" fill="none" /><polyline points="924.0,439.3 948.0,426.7 1791.7,767.5 1766.0,780.8" stroke="#ee8a1c" stroke-width="1" fill="none" /><polygon points="608.4,606.8 631.6,616.1 631.6,576.1 608.4,566.8" stroke="none" stroke-width="1" fill="#cccccc" /><polygon points="583.6,619.8 606.8,629.1 606.8,589.1 583.6,579.8" stroke="none" stroke-width="1" fill="#c0c0c0" /><polygon points="631.6,616.1 606.8,629.1 606.8,625.1 631.6,612.1" stroke="none" stroke-width="1" fill="#d0d0d0" /><polygon points="607.5,603.1 586.3,614.2 607.6,622.8 628.9,611.7" stroke="none" stroke-width="1" fill="#cfcfcf" /><polygon points="607.7,604.6 591.7,612.9 607.5,619.3 623.4,611.0" stroke="#f0b070" stroke-width="1.6" fill="none" /><line x1="615.0" y1="605.6" x2="593.7" y2="616.7" stroke="#1e242c" stroke-width="1.4" /><line x1="620.5" y1="605.3" x2="599.3" y2="616.5" stroke="#7aa0ff" stroke-width="1" /><polygon points="607.5,591.1 586.3,602.2 607.6,610.8 628.9,599.7" stroke="none" stroke-width="1" fill="#cfcfcf" /><polygon points="607.7,592.6 591.7,600.9 607.5,607.3 623.4,599.0" stroke="#f0b070" stroke-width="1.6" fill="none" /><line x1="615.0" y1="593.6" x2="593.7" y2="604.7" stroke="#1e242c" stroke-width="1.4" /><line x1="620.5" y1="593.3" x2="599.3" y2="604.5" stroke="#7aa0ff" stroke-width="1" /><polygon points="607.5,579.1 586.3,590.2 607.6,598.8 628.9,587.7" stroke="none" stroke-width="1" fill="#cfcfcf" /><polygon points="607.7,580.6 591.7,588.9 607.5,595.3 623.4,587.0" stroke="#f0b070" stroke-width="1.6" fill="none" /><line x1="615.0" y1="581.6" x2="593.7" y2="592.7" stroke="#1e242c" stroke-width="1.4" /><line x1="620.5" y1="581.3" x2="599.3" y2="592.5" stroke="#7aa0ff" stroke-width="1" /><path d="M610.6,622.4 l3,-7 l3,7 Z" fill="#9a9a9a"/><path d="M599.5,612.9 l3,-7 l3,7 Z" fill="#9a9a9a"/><polygon points="578.3,622.5 601.4,631.9 601.4,591.9 578.3,582.5" stroke="none" stroke-width="1" fill="#cccccc" /><polygon points="535.8,644.8 558.9,654.2 558.9,614.2 535.8,604.8" stroke="none" stroke-width="1" fill="#c0c0c0" /><polygon points="601.4,631.9 558.9,654.2 558.9,650.2 601.4,627.9" stroke="none" stroke-width="1" fill="#d0d0d0" /><polygon points="577.4,618.9 538.5,639.3 559.8,647.9 598.7,627.5" stroke="none" stroke-width="1" fill="#cfcfcf" /><polygon points="577.5,620.4 543.9,638.0 559.7,644.4 593.3,626.7" stroke="#f0b070" stroke-width="1.6" fill="none" /><line x1="584.8" y1="621.4" x2="545.9" y2="641.8" stroke="#1e242c" stroke-width="1.4" /><line x1="590.4" y1="621.1" x2="551.4" y2="641.5" stroke="#7aa0ff" stroke-width="1" /><polygon points="577.4,606.9 538.5,627.3 559.8,635.9 598.7,615.5" stroke="none" stroke-width="1" fill="#cfcfcf" /><polygon points="577.5,608.4 543.9,626.0 559.7,632.4 593.3,614.7" stroke="#f0b070" stroke-width="1.6" fill="none" /><line x1="584.8" y1="609.4" x2="545.9" y2="629.8" stroke="#1e242c" stroke-width="1.4" /><line x1="590.4" y1="609.1" x2="551.4" y2="629.5" stroke="#7aa0ff" stroke-width="1" /><polygon points="577.4,594.9 538.5,615.3 559.8,623.9 598.7,603.5" stroke="none" stroke-width="1" fill="#cfcfcf" /><polygon points="577.5,596.4 543.9,614.0 559.7,620.4 593.3,602.7" stroke="#f0b070" stroke-width="1.6" fill="none" /><line x1="584.8" y1="597.4" x2="545.9" y2="617.8" stroke="#1e242c" stroke-width="1.4" /><line x1="590.4" y1="597.1" x2="551.4" y2="617.5" stroke="#7aa0ff" stroke-width="1" /><path d="M571.6,642.8 l3,-7 l3,7 Z" fill="#9a9a9a"/><path d="M560.5,633.3 l3,-7 l3,7 Z" fill="#9a9a9a"/><polygon points="530.4,647.6 553.6,657.0 553.6,617.0 530.4,607.6" stroke="none" stroke-width="1" fill="#cccccc" /><polygon points="504.8,661.1 527.9,670.5 527.9,630.5 504.8,621.1" stroke="none" stroke-width="1" fill="#c0c0c0" /><polygon points="553.6,657.0 527.9,670.5 527.9,666.5 553.6,653.0" stroke="none" stroke-width="1" fill="#d0d0d0" /><polygon points="529.6,643.9 507.5,655.5 528.8,664.2 550.9,652.6" stroke="none" stroke-width="1" fill="#cfcfcf" /><polygon points="529.7,645.5 512.9,654.3 528.7,660.7 545.5,651.8" stroke="#f0b070" stroke-width="1.6" fill="none" /><line x1="537.0" y1="646.4" x2="514.9" y2="658.0" stroke="#1e242c" stroke-width="1.4" /><line x1="542.6" y1="646.2" x2="520.4" y2="657.8" stroke="#7aa0ff" stroke-width="1" /><polygon points="529.6,631.9 507.5,643.5 528.8,652.2 550.9,640.6" stroke="none" stroke-width="1" fill="#cfcfcf" /><polygon points="529.7,633.5 512.9,642.3 528.7,648.7 545.5,639.8" stroke="#f0b070" stroke-width="1.6" fill="none" /><line x1="537.0" y1="634.4" x2="514.9" y2="646.0" stroke="#1e242c" stroke-width="1.4" /><line x1="542.6" y1="634.2" x2="520.4" y2="645.8" stroke="#7aa0ff" stroke-width="1" /><polygon points="529.6,619.9 507.5,631.5 528.8,640.2 550.9,628.6" stroke="none" stroke-width="1" fill="#cfcfcf" /><polygon points="529.7,621.5 512.9,630.3 528.7,636.7 545.5,627.8" stroke="#f0b070" stroke-width="1.6" fill="none" /><line x1="537.0" y1="622.4" x2="514.9" y2="634.0" stroke="#1e242c" stroke-width="1.4" /><line x1="542.6" y1="622.2" x2="520.4" y2="633.8" stroke="#7aa0ff" stroke-width="1" /><path d="M532.2,663.5 l3,-7 l3,7 Z" fill="#9a9a9a"/><path d="M521.1,654.0 l3,-7 l3,7 Z" fill="#9a9a9a"/><line x1="501.3" y1="661.8" x2="478.2" y2="673.9" stroke="#7aa0ff" stroke-width="1.3" /><line x1="522.6" y1="670.4" x2="499.5" y2="682.5" stroke="#f0b070" stroke-width="1.5" /><line x1="501.3" y1="656.8" x2="478.2" y2="668.9" stroke="#7aa0ff" stroke-width="1.3" /><line x1="522.6" y1="665.4" x2="499.5" y2="677.5" stroke="#f0b070" stroke-width="1.5" /><line x1="501.3" y1="651.8" x2="478.2" y2="663.9" stroke="#7aa0ff" stroke-width="1.3" /><line x1="522.6" y1="660.4" x2="499.5" y2="672.5" stroke="#f0b070" stroke-width="1.5" /><line x1="501.3" y1="646.8" x2="478.2" y2="658.9" stroke="#7aa0ff" stroke-width="1.3" /><line x1="522.6" y1="655.4" x2="499.5" y2="667.5" stroke="#f0b070" stroke-width="1.5" /><line x1="501.3" y1="641.8" x2="478.2" y2="653.9" stroke="#7aa0ff" stroke-width="1.3" /><line x1="522.6" y1="650.4" x2="499.5" y2="662.5" stroke="#f0b070" stroke-width="1.5" /><line x1="501.3" y1="636.8" x2="478.2" y2="648.9" stroke="#7aa0ff" stroke-width="1.3" /><line x1="522.6" y1="645.4" x2="499.5" y2="657.5" stroke="#f0b070" stroke-width="1.5" /><line x1="501.3" y1="631.8" x2="478.2" y2="643.9" stroke="#7aa0ff" stroke-width="1.3" /><line x1="522.6" y1="640.4" x2="499.5" y2="652.5" stroke="#f0b070" stroke-width="1.5" /><line x1="501.3" y1="626.8" x2="478.2" y2="638.9" stroke="#7aa0ff" stroke-width="1.3" /><line x1="522.6" y1="635.4" x2="499.5" y2="647.5" stroke="#f0b070" stroke-width="1.5" /><line x1="501.3" y1="621.8" x2="478.2" y2="633.9" stroke="#7aa0ff" stroke-width="1.3" /><line x1="522.6" y1="630.4" x2="499.5" y2="642.5" stroke="#f0b070" stroke-width="1.5" /><polygon points="501.2,663.0 524.4,672.3 524.4,630.3 501.2,621.0" stroke="none" stroke-width="1" fill="#c8c8c8" /><circle cx="744.8" cy="551.3" r="3.3" fill="#9a9a9a"/><circle cx="725.3" cy="561.5" r="3.3" fill="#9a9a9a"/><circle cx="696.9" cy="576.4" r="3.3" fill="#9a9a9a"/><circle cx="673.9" cy="588.5" r="3.3" fill="#9a9a9a"/><circle cx="652.6" cy="599.6" r="3.3" fill="#9a9a9a"/><circle cx="636.7" cy="608.0" r="3.3" fill="#9a9a9a"/><circle cx="721.2" cy="543.6" r="3.3" fill="#9a9a9a"/><circle cx="678.7" cy="565.6" r="3.3" fill="#9a9a9a"/><circle cx="632.6" cy="588.1" r="3.3" fill="#9a9a9a"/><circle cx="709.3" cy="555.9" r="3.3" fill="#9a9a9a"/><circle cx="663.3" cy="578.1" r="3.3" fill="#9a9a9a"/><line x1="743.0" y1="552.2" x2="703.3" y2="531.6" stroke="#8a8a8a" stroke-width="0.8" /><line x1="698.7" y1="575.5" x2="659.0" y2="554.8" stroke="#8a8a8a" stroke-width="0.8" /><line x1="658.8" y1="596.4" x2="619.1" y2="575.7" stroke="#8a8a8a" stroke-width="0.8" /><line x1="733.3" y1="498.1" x2="476.5" y2="632.8" stroke="#ee8a1c" stroke-width="1.3" /><line x1="737.9" y1="500.0" x2="481.1" y2="634.7" stroke="#f0b070" stroke-width="1.3" /><line x1="742.6" y1="501.9" x2="485.7" y2="636.6" stroke="#ee8a1c" stroke-width="1.3" /><line x1="747.2" y1="503.7" x2="490.4" y2="638.4" stroke="#f0b070" stroke-width="1.3" /><line x1="751.8" y1="505.6" x2="495.0" y2="640.3" stroke="#ee8a1c" stroke-width="1.3" /><line x1="737.0" y1="523.6" x2="480.2" y2="658.3" stroke="#ee8a1c" stroke-width="1" /><line x1="746.3" y1="527.4" x2="489.4" y2="662.1" stroke="#ee8a1c" stroke-width="1" /><line x1="729.6" y1="542.6" x2="729.6" y2="495.6" stroke="#f0b070" stroke-width="2.2" /><line x1="729.6" y1="496.6" x2="756.5" y2="507.5" stroke="#f0b070" stroke-width="2.2" /><line x1="683.5" y1="566.8" x2="683.5" y2="519.8" stroke="#f0b070" stroke-width="2.2" /><line x1="683.5" y1="520.8" x2="710.4" y2="531.6" stroke="#f0b070" stroke-width="2.2" /><line x1="664.1" y1="577.0" x2="664.1" y2="530.0" stroke="#f0b070" stroke-width="2.2" /><line x1="664.1" y1="531.0" x2="690.9" y2="541.9" stroke="#f0b070" stroke-width="2.2" /><line x1="626.9" y1="596.5" x2="626.9" y2="549.5" stroke="#f0b070" stroke-width="2.2" /><line x1="626.9" y1="550.5" x2="653.7" y2="561.4" stroke="#f0b070" stroke-width="2.2" /><line x1="608.3" y1="606.2" x2="608.3" y2="559.2" stroke="#f0b070" stroke-width="2.2" /><line x1="608.3" y1="560.2" x2="635.1" y2="571.1" stroke="#f0b070" stroke-width="2.2" /><line x1="578.1" y1="622.0" x2="578.1" y2="575.0" stroke="#f0b070" stroke-width="2.2" /><line x1="578.1" y1="576.0" x2="605.0" y2="586.9" stroke="#f0b070" stroke-width="2.2" /><line x1="530.3" y1="647.1" x2="530.3" y2="600.1" stroke="#f0b070" stroke-width="2.2" /><line x1="530.3" y1="601.1" x2="557.2" y2="612.0" stroke="#f0b070" stroke-width="2.2" /><line x1="499.3" y1="663.4" x2="499.3" y2="616.4" stroke="#f0b070" stroke-width="2.2" /><line x1="499.3" y1="617.4" x2="526.2" y2="628.2" stroke="#f0b070" stroke-width="2.2" /><line x1="757.4" y1="553.9" x2="757.4" y2="508.9" stroke="#a45cf4" stroke-width="1.8" /><line x1="756.5" y1="510.3" x2="750.3" y2="513.6" stroke="#a45cf4" stroke-width="1.8" /><line x1="740.6" y1="562.7" x2="740.6" y2="517.7" stroke="#a45cf4" stroke-width="1.8" /><line x1="739.7" y1="519.1" x2="733.5" y2="522.4" stroke="#a45cf4" stroke-width="1.8" /><line x1="724.6" y1="571.0" x2="724.6" y2="526.0" stroke="#a45cf4" stroke-width="1.8" /><line x1="723.8" y1="527.5" x2="717.6" y2="530.8" stroke="#a45cf4" stroke-width="1.8" /><line x1="708.7" y1="579.4" x2="708.7" y2="534.4" stroke="#a45cf4" stroke-width="1.8" /><line x1="707.8" y1="535.9" x2="701.6" y2="539.1" stroke="#a45cf4" stroke-width="1.8" /><line x1="688.3" y1="590.1" x2="688.3" y2="545.1" stroke="#a45cf4" stroke-width="1.8" /><line x1="687.4" y1="546.5" x2="681.2" y2="549.8" stroke="#a45cf4" stroke-width="1.8" /><line x1="670.6" y1="599.4" x2="670.6" y2="554.4" stroke="#a45cf4" stroke-width="1.8" /><line x1="669.7" y1="555.8" x2="663.5" y2="559.1" stroke="#a45cf4" stroke-width="1.8" /><line x1="652.0" y1="609.1" x2="652.0" y2="564.1" stroke="#a45cf4" stroke-width="1.8" /><line x1="651.1" y1="565.6" x2="644.9" y2="568.8" stroke="#a45cf4" stroke-width="1.8" /><line x1="636.1" y1="617.5" x2="636.1" y2="572.5" stroke="#a45cf4" stroke-width="1.8" /><line x1="635.2" y1="574.0" x2="629.0" y2="577.2" stroke="#a45cf4" stroke-width="1.8" /><line x1="606.0" y1="633.3" x2="606.0" y2="588.3" stroke="#a45cf4" stroke-width="1.8" /><line x1="605.1" y1="589.7" x2="598.9" y2="593.0" stroke="#a45cf4" stroke-width="1.8" /><line x1="589.1" y1="642.1" x2="589.1" y2="597.1" stroke="#a45cf4" stroke-width="1.8" /><line x1="588.2" y1="598.6" x2="582.0" y2="601.8" stroke="#a45cf4" stroke-width="1.8" /><line x1="558.1" y1="658.4" x2="558.1" y2="613.4" stroke="#a45cf4" stroke-width="1.8" /><line x1="557.2" y1="614.8" x2="551.0" y2="618.1" stroke="#a45cf4" stroke-width="1.8" /><line x1="527.1" y1="674.6" x2="527.1" y2="629.6" stroke="#a45cf4" stroke-width="1.8" /><line x1="526.2" y1="631.1" x2="520.0" y2="634.3" stroke="#a45cf4" stroke-width="1.8" /><polygon points="729.6,495.6 472.7,630.3 500.6,641.6 757.4,506.9" stroke="#f07ee8" stroke-width="1.1" fill="none" /><polygon points="729.6,493.8 472.7,628.5 500.6,639.8 757.4,505.1" stroke="#f07ee8" stroke-width="1.1" fill="none" /><line x1="757.4" y1="506.9" x2="757.4" y2="553.9" stroke="#a45cf4" stroke-width="1.6" /><line x1="757.9" y1="553.0" x2="501.0" y2="687.7" stroke="#3a8cff" stroke-width="1.1" stroke-dasharray="4 2"/><line x1="758.8" y1="554.4" x2="501.9" y2="689.1" stroke="#30e0a0" stroke-width="1.1" stroke-dasharray="2 3"/><line x1="760.2" y1="556.0" x2="503.3" y2="690.7" stroke="#f07ee8" stroke-width="1" /><line x1="761.6" y1="557.5" x2="504.7" y2="692.2" stroke="#e8a0c8" stroke-width="0.8" /><path d="M755.0,564.1 l4,-2 l3,2 l5,-2 m-8,3 l3,1" stroke="#c8c8c8" stroke-width="0.9" fill="none"/><path d="M728.5,578.1 l4,-2 l3,2 l5,-2 m-8,3 l3,1" stroke="#c8c8c8" stroke-width="0.9" fill="none"/><path d="M701.9,592.0 l4,-2 l3,2 l5,-2 m-8,3 l3,1" stroke="#c8c8c8" stroke-width="0.9" fill="none"/><path d="M675.3,605.9 l4,-2 l3,2 l5,-2 m-8,3 l3,1" stroke="#c8c8c8" stroke-width="0.9" fill="none"/><path d="M650.5,618.9 l4,-2 l3,2 l5,-2 m-8,3 l3,1" stroke="#c8c8c8" stroke-width="0.9" fill="none"/><path d="M622.2,633.8 l4,-2 l3,2 l5,-2 m-8,3 l3,1" stroke="#c8c8c8" stroke-width="0.9" fill="none"/><path d="M591.2,650.1 l4,-2 l3,2 l5,-2 m-8,3 l3,1" stroke="#c8c8c8" stroke-width="0.9" fill="none"/><path d="M560.2,666.3 l4,-2 l3,2 l5,-2 m-8,3 l3,1" stroke="#c8c8c8" stroke-width="0.9" fill="none"/><path d="M531.8,681.2 l4,-2 l3,2 l5,-2 m-8,3 l3,1" stroke="#c8c8c8" stroke-width="0.9" fill="none"/><rect x="662.4" y="555.1" width="7" height="3" fill="#ff1010" transform="rotate(-27 665.4 556.6)"/><rect x="624.4" y="582.7" width="7" height="3" fill="#ff1010" transform="rotate(-27 627.4 584.2)"/><rect x="546.2" y="622.6" width="7" height="3" fill="#ff1010" transform="rotate(-27 549.2 624.1)"/><path d="M446.5,690.6L446.5,579.6 M472.0,700.9L472.0,589.9 M471.0,677.7L471.0,566.7 M496.5,688.0L496.5,577.0 M446.5,690.6L472.0,700.9 M446.5,579.6L472.0,589.9 M471.0,677.7L496.5,688.0 M471.0,566.7L496.5,577.0 M446.5,690.6L471.0,677.7 M446.5,579.6L471.0,566.7 M472.0,700.9L496.5,688.0 M472.0,589.9L496.5,577.0" stroke="#b8b8b8" stroke-width="1" fill="none"/><polygon points="473.3,699.5 495.2,688.0 495.2,586.2 473.3,597.7" stroke="#e8e8e8" stroke-width="2.2" fill="none" /><polygon points="476.4,696.1 492.1,687.9 492.1,591.4 476.4,599.6" stroke="#d0d0d0" stroke-width="1.4" fill="none" /><polygon points="474.6,697.5 494.1,687.3 494.1,681.3 474.6,691.5" stroke="none" stroke-width="1" fill="#e0e0e0" /><polygon points="479.1,605.2 489.7,599.6 489.7,593.6 479.1,599.2" stroke="#d8d8d8" stroke-width="1" fill="none" /><polygon points="478.6,614.0 504.5,600.3 504.5,692.0 478.6,704.8" stroke="#a45cf4" stroke-width="2.2" fill="none" /><polyline points="471.0,666.0 431.4,685.0 445.6,690.6" stroke="#ee8a1c" stroke-width="1" fill="none" /><line x1="457.0" y1="670.8" x2="468.0" y2="672.6" stroke="#ee8a1c" stroke-width="1" /><rect x="449" y="679" width="8" height="4" fill="#ff1010" transform="rotate(-25 453 681)"/><path d="M809.8,430.6L809.8,389.3 M825.9,437.1L825.9,395.8 M856.3,406.2L856.3,364.9 M872.4,412.7L872.4,371.4 M809.8,430.6L825.9,437.1 M809.8,389.3L825.9,395.8 M856.3,406.2L872.4,412.7 M856.3,364.9L872.4,371.4 M809.8,430.6L856.3,406.2 M809.8,389.3L856.3,364.9 M825.9,437.1L872.4,412.7 M825.9,395.8L872.4,371.4" stroke="#8c9a1e" stroke-width="2" fill="none"/><line x1="812.1" y1="419.5" x2="858.6" y2="395.2" stroke="#8c9a1e" stroke-width="1.2" /><line x1="814.4" y1="420.5" x2="860.9" y2="396.1" stroke="#8c9a1e" stroke-width="1.2" /><line x1="852.5" y1="423.2" x2="852.5" y2="382.2" stroke="#8c9a1e" stroke-width="2" /><polygon points="824.6,436.6 871.1,412.2 871.1,370.6 824.6,395.0" stroke="#a45cf4" stroke-width="1.8" fill="none" /><line x1="839.2" y1="429.0" x2="839.2" y2="387.4" stroke="#a45cf4" stroke-width="1.6" /><line x1="856.2" y1="420.1" x2="856.2" y2="378.5" stroke="#a45cf4" stroke-width="1.6" /><line x1="826.4" y1="429.7" x2="837.0" y2="396.1" stroke="#a0a0a0" stroke-width="0.8" stroke-dasharray="2 1.5"/><line x1="858.3" y1="413.0" x2="868.9" y2="379.4" stroke="#a0a0a0" stroke-width="0.8" /><line x1="840.6" y1="424.2" x2="854.7" y2="384.8" stroke="#a0a0a0" stroke-width="0.8" /><circle cx="824.6" cy="434.6" r="2" fill="#a8a8a8"/><circle cx="824.6" cy="404.6" r="2" fill="#a8a8a8"/><circle cx="870.7" cy="402.4" r="2" fill="#a8a8a8"/><circle cx="870.7" cy="376.4" r="2" fill="#a8a8a8"/><circle cx="853.9" cy="415.3" r="2" fill="#a8a8a8"/><circle cx="853.9" cy="387.3" r="2" fill="#a8a8a8"/><ellipse cx="837.0" cy="426.1" rx="3.5" ry="2.2" fill="#e8e8e8" stroke="#fff"/><polyline points="803.0,499.0 780.6,490.6 829.3,466.2 850.0,475.0" stroke="#ee8a1c" stroke-width="1" fill="none" /><polyline points="850.0,475.0 872.4,484.2 825.6,507.5 803.0,499.0" stroke="#8c9a1e" stroke-width="1" fill="none" /><rect x="808" y="481" width="7" height="4" fill="#ff1010" transform="rotate(-25 812 483)"/><path d="M836,505 l6,-2 l3,3 l6,-4 l4,2 l5,-5 l4,1 l3,-6 M847,501 l2,4 M861,493 l1,4" stroke="#c8c8c8" stroke-width="0.9" fill="none"/><path d="M1092.0,454.0L1092.0,413.4 M1132.8,470.5L1132.8,429.9 M1105.3,447.0L1105.3,406.4 M1146.1,463.5L1146.1,422.9 M1092.0,454.0L1132.8,470.5 M1092.0,413.4L1132.8,429.9 M1105.3,447.0L1146.1,463.5 M1105.3,406.4L1146.1,422.9 M1092.0,454.0L1105.3,447.0 M1092.0,413.4L1105.3,406.4 M1132.8,470.5L1146.1,463.5 M1132.8,429.9L1146.1,422.9" stroke="#a45cf4" stroke-width="1.8" fill="none"/><polygon points="1095.7,451.5 1129.1,465.0 1129.1,433.0 1095.7,419.5" stroke="#a45cf4" stroke-width="1.4" fill="none" /><line x1="1109.0" y1="444.5" x2="1095.7" y2="451.5" stroke="#a45cf4" stroke-width="1.2" /><ellipse cx="1119.8" cy="466.3" rx="4" ry="2.4" fill="none" stroke="#e0e0e0" stroke-width="1.4"/><polyline points="1128.0,506.7 1093.4,527.0 1133.8,543.7" stroke="#a45cf4" stroke-width="1" fill="none" /><polyline points="1106.0,520.6 1128.0,506.7 1171.3,523.4 1133.8,543.7" stroke="#ee8a1c" stroke-width="1" fill="none" /><rect x="1149" y="511" width="8" height="4" fill="#ff1010" transform="rotate(-25 1153 513)"/><polygon points="1195.9,547.9 1222.8,558.8 1222.8,530.8 1195.9,519.9" stroke="none" stroke-width="1" fill="#f2f2f2" /><polygon points="1196.8,575.4 1223.7,586.3 1223.7,558.3 1196.8,547.4" stroke="none" stroke-width="1" fill="#c8c8c8" /><polygon points="1220.7,534.9 1247.6,545.7 1247.6,520.7 1220.7,509.9" stroke="none" stroke-width="1" fill="#e0e0e0" /><polygon points="1199.6,568.5 1220.9,577.2 1220.9,580.2 1199.6,571.5" stroke="none" stroke-width="0" fill="#2a3038" /><line x1="1197.7" y1="565.8" x2="1222.8" y2="575.9" stroke="#7aa0ff" stroke-width="1.3" /><line x1="1197.7" y1="573.8" x2="1243.1" y2="573.2" stroke="#2aa060" stroke-width="1.8" /><line x1="1201.3" y1="568.8" x2="1243.1" y2="567.6" stroke="#7aa0ff" stroke-width="1" /><polygon points="1199.6,560.5 1220.9,569.2 1220.9,572.2 1199.6,563.5" stroke="none" stroke-width="0" fill="#2a3038" /><line x1="1197.7" y1="557.8" x2="1222.8" y2="567.9" stroke="#7aa0ff" stroke-width="1.3" /><line x1="1197.7" y1="565.8" x2="1243.1" y2="565.2" stroke="#2aa060" stroke-width="1.8" /><line x1="1201.3" y1="560.8" x2="1243.1" y2="559.6" stroke="#7aa0ff" stroke-width="1" /><polygon points="1199.6,552.5 1220.9,561.2 1220.9,564.2 1199.6,555.5" stroke="none" stroke-width="0" fill="#2a3038" /><line x1="1197.7" y1="549.8" x2="1222.8" y2="559.9" stroke="#7aa0ff" stroke-width="1.3" /><line x1="1197.7" y1="557.8" x2="1243.1" y2="557.2" stroke="#2aa060" stroke-width="1.8" /><line x1="1201.3" y1="552.8" x2="1243.1" y2="551.6" stroke="#7aa0ff" stroke-width="1" /><path d="M1199.5,504.9L1199.5,470.9 M1222.7,514.2L1222.7,480.2 M1221.7,493.2L1221.7,459.2 M1244.8,502.6L1244.8,468.6 M1199.5,504.9L1222.7,514.2 M1199.5,470.9L1222.7,480.2 M1221.7,493.2L1244.8,502.6 M1221.7,459.2L1244.8,468.6 M1199.5,504.9L1221.7,493.2 M1199.5,470.9L1221.7,459.2 M1222.7,514.2L1244.8,502.6 M1222.7,480.2L1244.8,468.6" stroke="#8c9a1e" stroke-width="1.6" fill="none"/><path d="M1195.0,577.5L1195.0,469.5 M1223.3,588.9L1223.3,480.9 M1222.5,563.1L1222.5,455.1 M1250.7,574.5L1250.7,466.5 M1195.0,577.5L1223.3,588.9 M1195.0,469.5L1223.3,480.9 M1222.5,563.1L1250.7,574.5 M1222.5,455.1L1250.7,466.5 M1195.0,577.5L1222.5,563.1 M1195.0,469.5L1222.5,455.1 M1223.3,588.9L1250.7,574.5 M1223.3,480.9L1250.7,466.5" stroke="#a45cf4" stroke-width="1.7" fill="none"/><polygon points="1195.0,519.5 1223.3,530.9 1250.7,516.5 1222.5,505.1" stroke="#a45cf4" stroke-width="1.6" fill="none" /><polyline points="1195.0,493.5 1217.2,502.5 1227.9,496.9" stroke="#a45cf4" stroke-width="1.3" fill="none" /><line x1="1217.2" y1="502.5" x2="1217.2" y2="536.5" stroke="#a45cf4" stroke-width="1.3" /><line x1="1202.3" y1="516.0" x2="1240.3" y2="513.3" stroke="#bdbdbd" stroke-width="0.8" stroke-dasharray="3 2"/><line x1="1208.9" y1="583.1" x2="1208.9" y2="553.1" stroke="#d0d0d0" stroke-width="1.4" /><line x1="1195.0" y1="577.5" x2="1223.3" y2="588.9" stroke="#a45cf4" stroke-width="1.6" /><line x1="1195.0" y1="580.5" x2="1223.3" y2="591.9" stroke="#40b0ff" stroke-width="1.6" /><line x1="1193.2" y1="583.4" x2="1221.0" y2="594.7" stroke="#30a060" stroke-width="1" /><rect x="1195.8" y="581.6" width="4" height="6" fill="#b0b0b0"/><rect x="1218.0" y="590.6" width="4" height="6" fill="#b0b0b0"/><path d="M1197,592 l6,8 l12,5 l14,-3 M1205,598 l4,-2" stroke="#c0c0c0" stroke-width="0.9" fill="none"/><rect x="1241" y="557" width="20" height="7" fill="#ff1010" transform="rotate(22 1251 560)"/><rect x="1258" y="566" width="14" height="3" fill="#ff1010" transform="rotate(22 1265 567)"/><polyline points="1250.0,575.0 1262.0,585.0 1275.0,577.0 1290.0,579.0" stroke="#ee8a1c" stroke-width="1.2" fill="none" /><path d="M1284.8,614.7L1284.8,498.7 M1320.6,629.2L1320.6,513.2 M1303.7,604.8L1303.7,488.8 M1339.4,619.3L1339.4,503.3 M1284.8,614.7L1320.6,629.2 M1284.8,498.7L1320.6,513.2 M1303.7,604.8L1339.4,619.3 M1303.7,488.8L1339.4,503.3 M1284.8,614.7L1303.7,604.8 M1284.8,498.7L1303.7,488.8 M1320.6,629.2L1339.4,619.3 M1320.6,513.2L1339.4,503.3" stroke="#2f9a50" stroke-width="1.6" fill="none"/><polygon points="1284.8,498.7 1320.6,513.2 1339.4,503.3 1303.7,488.8" stroke="#56e88c" stroke-width="1.6" fill="none" /><polygon points="1284.8,507.7 1320.6,522.2 1339.4,512.3 1303.7,497.8" stroke="#56e88c" stroke-width="1.6" fill="none" /><polygon points="1284.8,516.7 1320.6,531.2 1339.4,521.3 1303.7,506.8" stroke="#56e88c" stroke-width="1.6" fill="none" /><polygon points="1284.8,525.7 1320.6,540.2 1339.4,530.3 1303.7,515.8" stroke="#56e88c" stroke-width="1.6" fill="none" /><polygon points="1284.8,535.7 1320.6,550.2 1339.4,540.3 1303.7,525.8" stroke="#56e88c" stroke-width="1.6" fill="none" /><polygon points="1284.8,544.7 1320.6,559.2 1339.4,549.3 1303.7,534.8" stroke="#56e88c" stroke-width="1.6" fill="none" /><polygon points="1284.8,553.7 1320.6,568.2 1339.4,558.3 1303.7,543.8" stroke="#56e88c" stroke-width="1.6" fill="none" /><line x1="1293.7" y1="610.1" x2="1293.7" y2="494.1" stroke="#2f9a50" stroke-width="1.2" /><line x1="1329.4" y1="624.5" x2="1329.4" y2="508.5" stroke="#2f9a50" stroke-width="1.2" /><polygon points="1277.7,613.6 1313.5,628.1 1313.5,571.1 1277.7,556.6" stroke="none" stroke-width="1" fill="#c8c8c8" /><polygon points="1313.5,628.1 1334.4,617.1 1334.4,560.1 1313.5,571.1" stroke="none" stroke-width="1" fill="#b4b4b4" /><polygon points="1282.3,607.5 1308.3,618.0 1308.3,614.0 1282.3,603.5" stroke="none" stroke-width="0" fill="#2a3038" /><line x1="1279.6" y1="599.4" x2="1312.0" y2="612.5" stroke="#7aa0ff" stroke-width="1.4" /><line x1="1279.6" y1="608.4" x2="1331.5" y2="611.3" stroke="#2f9a50" stroke-width="2" /><line x1="1285.9" y1="604.5" x2="1330.6" y2="604.9" stroke="#7aa0ff" stroke-width="1.2" /><polygon points="1282.3,595.5 1308.3,606.0 1308.3,602.0 1282.3,591.5" stroke="none" stroke-width="0" fill="#2a3038" /><line x1="1279.6" y1="587.4" x2="1312.0" y2="600.5" stroke="#7aa0ff" stroke-width="1.4" /><line x1="1279.6" y1="596.4" x2="1331.5" y2="599.3" stroke="#2f9a50" stroke-width="2" /><line x1="1285.9" y1="592.5" x2="1330.6" y2="592.9" stroke="#7aa0ff" stroke-width="1.2" /><polygon points="1282.3,583.5 1308.3,594.0 1308.3,590.0 1282.3,579.5" stroke="none" stroke-width="0" fill="#2a3038" /><line x1="1279.6" y1="575.4" x2="1312.0" y2="588.5" stroke="#7aa0ff" stroke-width="1.4" /><line x1="1279.6" y1="584.4" x2="1331.5" y2="587.3" stroke="#2f9a50" stroke-width="2" /><line x1="1285.9" y1="580.5" x2="1330.6" y2="580.9" stroke="#7aa0ff" stroke-width="1.2" /><polygon points="1282.3,571.5 1308.3,582.0 1308.3,578.0 1282.3,567.5" stroke="none" stroke-width="0" fill="#2a3038" /><line x1="1279.6" y1="563.4" x2="1312.0" y2="576.5" stroke="#7aa0ff" stroke-width="1.4" /><line x1="1279.6" y1="572.4" x2="1331.5" y2="575.3" stroke="#2f9a50" stroke-width="2" /><line x1="1285.9" y1="568.5" x2="1330.6" y2="568.9" stroke="#7aa0ff" stroke-width="1.2" /><line x1="1277.7" y1="613.6" x2="1277.7" y2="556.6" stroke="#a45cf4" stroke-width="1.6" /><line x1="1277.7" y1="613.6" x2="1313.5" y2="628.1" stroke="#a45cf4" stroke-width="1.8" /><line x1="1277.7" y1="615.6" x2="1313.5" y2="630.1" stroke="#3a8cff" stroke-width="1.2" /><line x1="1313.5" y1="628.1" x2="1334.4" y2="617.1" stroke="#2f9a50" stroke-width="1.4" /><ellipse cx="1309.2" cy="622.4" rx="5" ry="3" fill="#f0f0f0"/><rect x="1338" y="586" width="22" height="8" fill="#ff1010" transform="rotate(22 1349 590)"/><rect x="1362" y="591" width="24" height="4" fill="#ff1010" transform="rotate(22 1374 593)"/><rect x="1335" y="597" width="10" height="6" fill="#ff1010" transform="rotate(22 1340 600)"/><rect x="1368" y="604" width="14" height="4" fill="#ff1010" transform="rotate(22 1375 606)"/><rect x="1280" y="568" width="12" height="4" fill="#ff1010" transform="rotate(22 1286 570)"/><line x1="1335.0" y1="583.7" x2="1400.0" y2="610.0" stroke="#ee8a1c" stroke-width="1.1" /><line x1="1341.0" y1="604.6" x2="1378.0" y2="611.6" stroke="#ee8a1c" stroke-width="1" /><line x1="1341.0" y1="614.0" x2="1365.0" y2="600.0" stroke="#ee8a1c" stroke-width="1.2" /><line x1="756.3" y1="699.0" x2="756.3" y2="793.7" stroke="#6a78e8" stroke-width="1.2" /><line x1="729.0" y1="752.3" x2="812.3" y2="783.5" stroke="#5cdc5c" stroke-width="1.2" /><line x1="710.2" y1="788.0" x2="780.2" y2="750.0" stroke="#e06a6a" stroke-width="1.2" /><rect x="753.3" y="759.5" width="6" height="6" fill="#212830" stroke="#ffffff" stroke-width="1.2"/><line x1="329.6" y1="822.3" x2="329.6" y2="866.7" stroke="#f4f4f4" stroke-width="1.2" /><line x1="329.6" y1="866.7" x2="367.5" y2="881.2" stroke="#f4f4f4" stroke-width="1.2" /><line x1="329.6" y1="866.7" x2="297.5" y2="884.2" stroke="#f4f4f4" stroke-width="1.2" /><path d="M325,866 l4.6,-2.5 l4.6,2.5 l-4.6,2.5 Z" fill="none" stroke="#fff" stroke-width="1.1"/><path d="M334,808.3 h13 l-13,12.6 h13" stroke="#fff" stroke-width="1.3" fill="none"/><path d="M369,864 l6.5,7 l6.5,-7 M375.5,871 v6" stroke="#fff" stroke-width="1.3" fill="none"/><path d="M302,871 l13,12 M315,871 l-13,12" stroke="#fff" stroke-width="1.3" fill="none"/><path d="M1756,287.5 a64,31.5 0 1,0 128,0 a64,31.5 0 1,0 -128,0 Z M1770,287.3 a50,22.3 0 1,0 100,0 a50,22.3 0 1,0 -100,0 Z" fill="#474e5a" fill-rule="evenodd"/><ellipse cx="1820" cy="287.3" rx="50" ry="22.3" fill="#1c2027"/><g font-family="Liberation Sans, sans-serif" font-size="15" font-weight="bold" fill="#b8bcc2" text-anchor="middle"><text transform="translate(1777 266) rotate(-15) scale(1 0.85)">S</text><text transform="translate(1776 312) rotate(22) scale(1 0.85)">E</text><text transform="translate(1869 309) rotate(-28) scale(1 0.85)">N</text><text transform="translate(1858 263) rotate(18) scale(1 0.85)">W</text></g><defs><linearGradient id="cl" x1="0" y1="0" x2="0" y2="1"><stop offset="0" stop-color="#c6c6c8"/><stop offset="1" stop-color="#aeaeb2"/></linearGradient><linearGradient id="cr" x1="0" y1="0" x2="0" y2="1"><stop offset="0" stop-color="#bdbdc0"/><stop offset="1" stop-color="#a9a9ad"/></linearGradient></defs><polygon points="1784.6,236.3 1817.8,220.8 1854.4,232.2 1823.5,248.9" fill="#c4c4c6"/><polygon points="1784.6,236.3 1823.5,248.9 1823.5,294.6 1786.9,276.3" fill="url(#cl)"/><polygon points="1823.5,248.9 1854.4,232.2 1852.8,274 1823.5,294.6" fill="url(#cr)"/><line x1="1823.5" y1="250" x2="1823.5" y2="294" stroke="#60646a" stroke-width="1" stroke-dasharray="4 3"/><line x1="1786" y1="237" x2="1822" y2="248" stroke="#6a6e74" stroke-width="0.9" stroke-dasharray="4 3"/><line x1="1825" y1="248" x2="1853" y2="233" stroke="#6a6e74" stroke-width="0.9" stroke-dasharray="4 3"/><rect x="1817" y="245" width="6" height="9" fill="#d0d0d4" opacity="0.7"/><g font-family="Liberation Sans, sans-serif" font-weight="bold" fill="#50555e" text-anchor="middle"><text transform="translate(1804 271) rotate(17) scale(0.85 1.1)" font-size="11">RIGHT</text><text transform="translate(1839 271) rotate(-33) scale(0.85 1.1)" font-size="10.5">BACK</text><text transform="translate(1818 234) rotate(165) scale(0.9 0.8)" font-size="9">TOP</text></g><rect x="1796.5" y="343.5" width="47" height="16" rx="4" fill="#5e6571" stroke="#868c96"/><text x="1800" y="355.5" font-family="Liberation Sans, sans-serif" font-size="10.5" fill="#c2c6cc">WCS</text><path d="M1829,349 l7,0 l-3.5,4 Z" fill="none" stroke="#a0a6ae" stroke-width="0.9"/></g></svg>
</body></html>
